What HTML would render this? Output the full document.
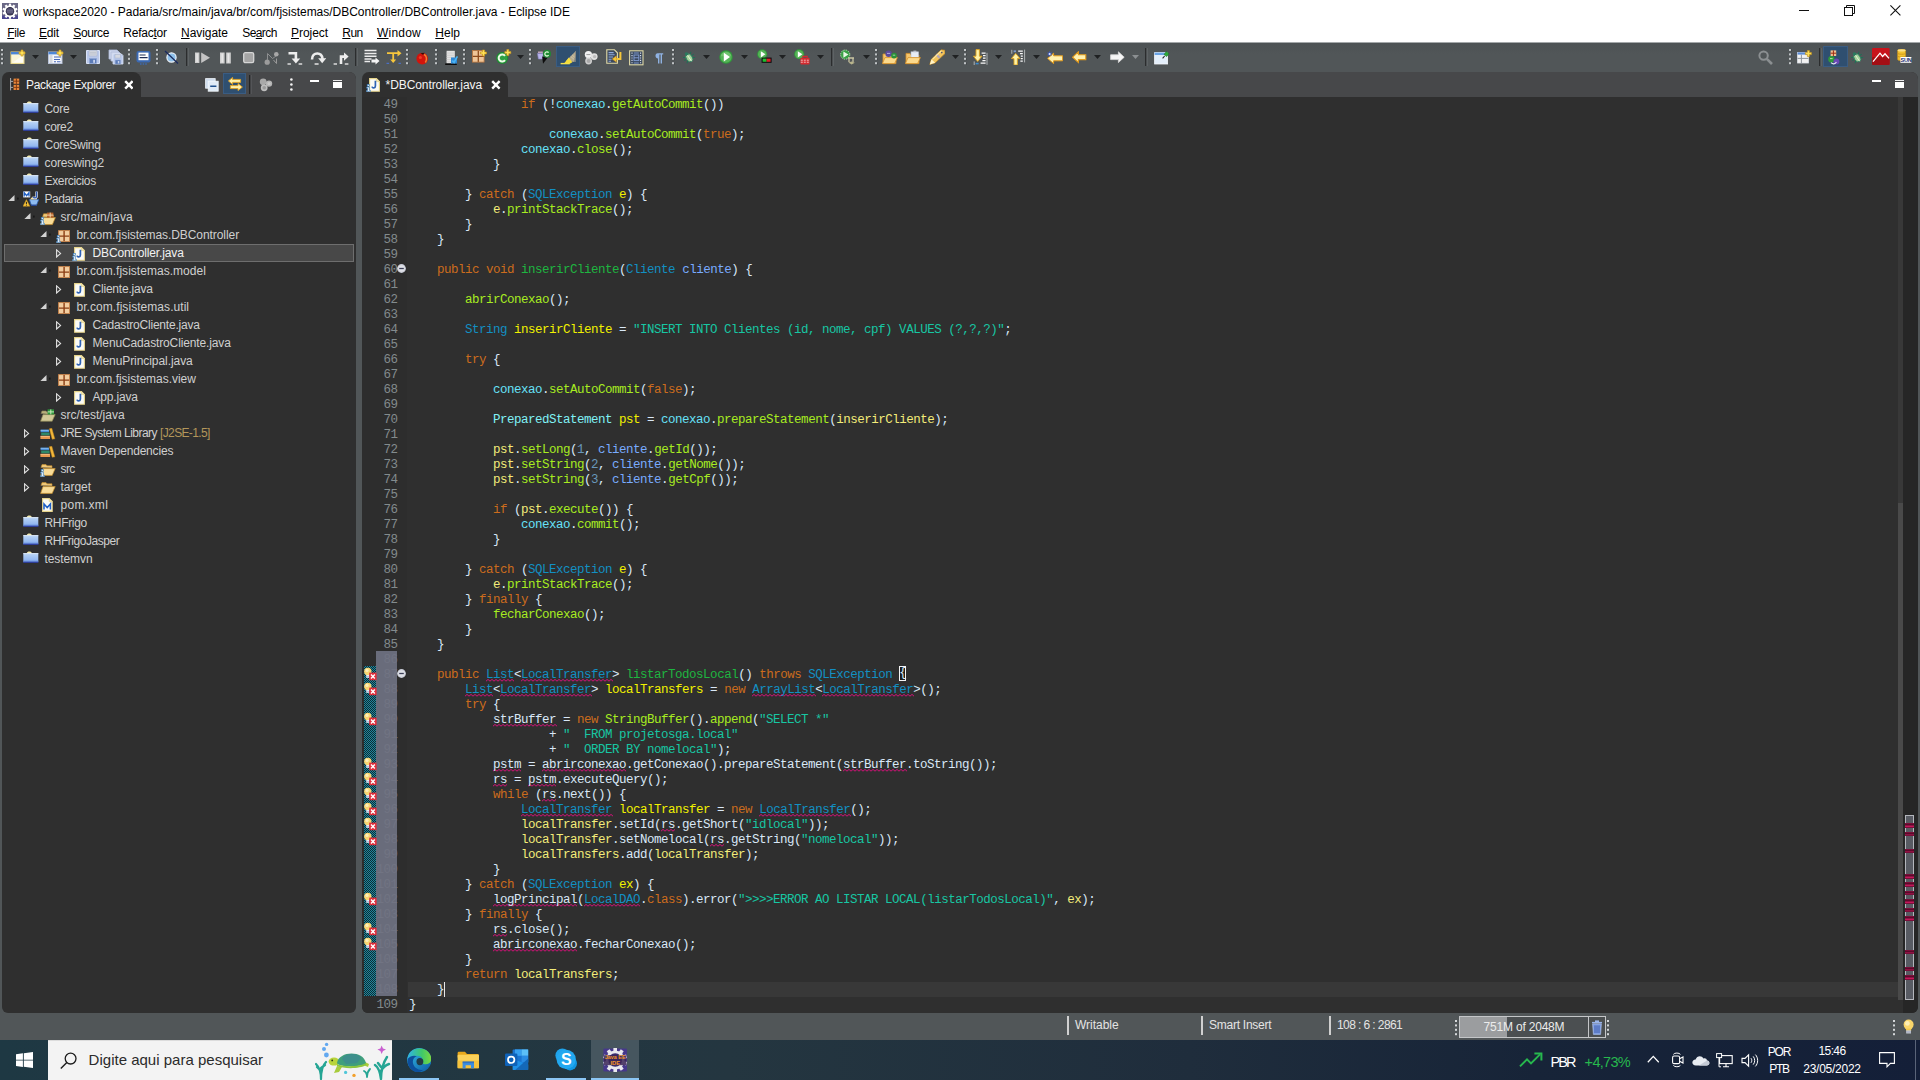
<!DOCTYPE html>
<html lang="pt"><head><meta charset="utf-8"><title>Eclipse IDE</title>
<style>
*{box-sizing:border-box}
html,body{margin:0;padding:0}
body{width:1920px;height:1080px;overflow:hidden;position:relative;background:#515658;font-family:"Liberation Sans",sans-serif;font-size:12px;color:#eee}
.abs{position:absolute}
#title{position:absolute;left:0;top:0;width:1920px;height:22px;background:#fff;color:#000}
#title .t{position:absolute;left:23.3px;top:5px;font-size:12px;line-height:15px;white-space:nowrap}
#menu{position:absolute;left:0;top:22px;width:1920px;height:21px;background:#fff;color:#000}
#menu span{position:absolute;top:4px;font-size:12px;line-height:15px;white-space:nowrap}
#menu u{text-decoration:underline;text-underline-offset:1px}
#toolbar{position:absolute;left:0;top:43px;width:1920px;height:29px;background:linear-gradient(#4d5254,#515658 40%)}
/* panels */
.panel{position:absolute;background:#2f2f2f;border-radius:7px 7px 6px 6px;overflow:hidden}
.phead{position:absolute;left:0;top:0;right:0;height:25px;background:#47484a}
.tab{position:absolute;left:0;top:0;height:25px;background:#2f2f2f;border-radius:7px 8px 0 0}
.tab .lbl{position:absolute;top:6px;font-size:12px;line-height:15px;color:#f4f4f4;white-space:nowrap}
/* tree */
.tx{position:absolute;height:18px;font-size:12px;line-height:18px;color:#cfcfcf;white-space:nowrap}
/* code */
.cl{position:absolute;font-family:"Liberation Mono",monospace;font-size:12.5px;letter-spacing:-0.5px;line-height:15px;height:15px;white-space:pre;color:#d9e8f7}
.ln{position:absolute;left:362px;width:35.5px;text-align:right;font-family:"Liberation Mono",monospace;font-size:12.5px;letter-spacing:-0.5px;line-height:15px;height:15px;color:#838b8d}
.ln.dim{color:#717483}
.k{color:#cc6c1d}.c{color:#1290c3}.i{color:#80f2f6}.m{color:#a7ec21}.d{color:#1eb540}.v{color:#f2f200}.r{color:#f3ec79}.p{color:#79abff}.f{color:#66e1f8}.s{color:#17c6a3}.n{color:#6897bb}
.u{background:linear-gradient(45deg,transparent 38%,#d8127c 38%,#d8127c 62%,transparent 62%) 0 12px/4px 3px repeat-x,linear-gradient(-45deg,transparent 38%,#d8127c 38%,#d8127c 62%,transparent 62%) 2px 12px/4px 3px repeat-x;padding:0 0.5px;margin:0 -0.5px}
.box{display:inline-block;height:15px;line-height:15px;vertical-align:top;margin-top:-2px;outline:1px solid #f4f4f4;outline-offset:-1px;background:#1b1b1b}
/* status */
#status{position:absolute;left:0;top:1013px;width:1920px;height:27px;background:#515658;color:#e4e4e4}
#status .st{position:absolute;top:5px;font-size:12px;line-height:15px;white-space:nowrap}
#status .sep{position:absolute;top:3px;width:2px;height:19px;background:#d0d0d0}
/* taskbar */
#taskbar{position:absolute;left:0;top:1040px;width:1920px;height:40px;background:linear-gradient(90deg,#1e3843 0%,#243640 38%,#1f2d3c 62%,#172438 80%,#141f38 100%);color:#fff}

</style></head>
<body>
<div id="title"><svg class="abs" style="left:2px;top:3px" width="16" height="16" viewBox="0 0 16 16" ><rect width="16" height="16" fill="#6a6886"/><rect y="12.6" width="16" height="3.4" fill="#4a4690"/><g fill="#fff"><circle cx="8" cy="8.2" r="6"/><rect x="6.9" y="0.6" width="2.2" height="3" transform="rotate(0 8 8.2)"/><rect x="6.9" y="0.6" width="2.2" height="3" transform="rotate(36 8 8.2)"/><rect x="6.9" y="0.6" width="2.2" height="3" transform="rotate(72 8 8.2)"/><rect x="6.9" y="0.6" width="2.2" height="3" transform="rotate(108 8 8.2)"/><rect x="6.9" y="0.6" width="2.2" height="3" transform="rotate(144 8 8.2)"/><rect x="6.9" y="0.6" width="2.2" height="3" transform="rotate(180 8 8.2)"/><rect x="6.9" y="0.6" width="2.2" height="3" transform="rotate(216 8 8.2)"/><rect x="6.9" y="0.6" width="2.2" height="3" transform="rotate(252 8 8.2)"/><rect x="6.9" y="0.6" width="2.2" height="3" transform="rotate(288 8 8.2)"/><rect x="6.9" y="0.6" width="2.2" height="3" transform="rotate(324 8 8.2)"/></g><circle cx="8" cy="8.2" r="4.2" fill="#2a2840"/><circle cx="8" cy="8.2" r="3.4" fill="#4a4868"/><path d="M4.6 7.2h6.8M4.6 9h6.8" stroke="#8a88a8" stroke-width=".7"/></svg><div class="t"><span style="letter-spacing:-0.015px">workspace2020 - Padaria/src/main/java/br/com/fjsistemas/DBController/DBController.java - Eclipse IDE</span></div><svg class="abs" style="left:1799px;top:10px" width="10" height="1" viewBox="0 0 10 1" ><rect width="10" height="1" fill="#111"/></svg><svg class="abs" style="left:1844px;top:5px" width="11" height="11" viewBox="0 0 11 11" ><path d="M2.5 2.5V0.5h8v8h-2" fill="none" stroke="#111" stroke-width="1"/><rect x="0.5" y="2.5" width="8" height="8" fill="none" stroke="#111" stroke-width="1"/></svg><svg class="abs" style="left:1890px;top:5px" width="11" height="11" viewBox="0 0 11 11" ><path d="M0.4 0.4l10 10M10.4 0.4l-10 10" stroke="#111" stroke-width="1.1"/></svg></div>
<div id="menu"><span style="left:7.3px;letter-spacing:-0.411px"><u>F</u>ile</span><span style="left:39px;letter-spacing:-0.172px"><u>E</u>dit</span><span style="left:73.3px;letter-spacing:-0.389px"><u>S</u>ource</span><span style="left:123.3px;letter-spacing:-0.245px">Refac<u>t</u>or</span><span style="left:181px;letter-spacing:-0.047px"><u>N</u>avigate</span><span style="left:242.3px;letter-spacing:-0.605px">Se<u>a</u>rch</span><span style="left:291px;letter-spacing:-0.051px"><u>P</u>roject</span><span style="left:342.3px;letter-spacing:-0.539px"><u>R</u>un</span><span style="left:377px;letter-spacing:0.219px"><u>W</u>indow</span><span style="left:435.3px;letter-spacing:0.003px"><u>H</u>elp</span></div>
<div class="abs" id="tbline" style="left:0;top:42px;width:1920px;height:1px;background:#a4a8aa"></div>
<div id="toolbar"><svg class="abs" style="left:0.7px;top:5.9px" width="3" height="16" viewBox="0 0 3 16" ><rect x="0" y="0" width="2" height="2" fill="#bfc3c5"/><rect x="2" y="0.5" width="1" height="2" fill="#3a3e40" opacity=".55"/><rect x="0" y="4.4" width="2" height="2" fill="#bfc3c5"/><rect x="2" y="4.9" width="1" height="2" fill="#3a3e40" opacity=".55"/><rect x="0" y="8.8" width="2" height="2" fill="#bfc3c5"/><rect x="2" y="9.3" width="1" height="2" fill="#3a3e40" opacity=".55"/><rect x="0" y="13.2" width="2" height="2" fill="#bfc3c5"/><rect x="2" y="13.7" width="1" height="2" fill="#3a3e40" opacity=".55"/></svg>
<svg class="abs" style="left:10px;top:6px" width="16" height="16" viewBox="0 0 16 16" ><rect x="1" y="3" width="13" height="11.5" fill="#fbf6d8" stroke="#e9d88c"/><rect x="1" y="3" width="13" height="2.4" fill="#4d86d6"/><path d="M3 13.5L13 6v7.5z" fill="#fff" opacity=".7"/><path d="M11 1h2v2h2v2h-2v2h-2v-2h-2v-2h2z" fill="#ffe35a" stroke="#c8961e" stroke-width=".7"/></svg>
<svg class="abs" style="left:32.4px;top:12.3px" width="7" height="4" viewBox="0 0 7 4" ><path d="M0 0h7L3.5 4z" fill="#1f2122"/></svg>
<svg class="abs" style="left:48px;top:6px" width="16" height="16" viewBox="0 0 16 16" ><rect x="0.5" y="3" width="13.5" height="11.5" fill="#f4f6fb" stroke="#b8c2d8"/><rect x="0.5" y="3" width="13.5" height="2.4" fill="#4d86d6"/><rect x="1.5" y="6" width="3" height="8" fill="#d4d8e0"/><path d="M6 8h7M6 10.5h6M6 12.8h2M9 12.8h3.5" stroke="#4868b8" stroke-width="1.1"/><path d="M11 1h2v2h2v2h-2v2h-2v-2h-2v-2h2z" fill="#ffe35a" stroke="#c8961e" stroke-width=".7"/></svg>
<svg class="abs" style="left:70.2px;top:12.3px" width="7" height="4" viewBox="0 0 7 4" ><path d="M0 0h7L3.5 4z" fill="#1f2122"/></svg>
<svg class="abs" style="left:85px;top:6px" width="16" height="16" viewBox="0 0 16 16" ><path d="M1.5 1.5h13v13h-13z" fill="#b9c8ea" stroke="#d9e2f6"/><rect x="4" y="1.5" width="8" height="5.5" fill="#d5d9e2" stroke="#a9b3c9" stroke-width=".6"/><path d="M5 3.3h6M5 5h6" stroke="#b4b9c4" stroke-width=".7"/><rect x="4.5" y="9.5" width="7" height="5" fill="#5c7cb8" stroke="#8fa6d6" stroke-width=".6"/><rect x="8.2" y="10.8" width="1.8" height="3" fill="#c7d3ee"/></svg>
<svg class="abs" style="left:108px;top:6px" width="16" height="16" viewBox="0 0 16 16" ><path d="M1 1h8l2 2v7h-10z" fill="#cfd8ee" stroke="#aebbd8" stroke-width=".8"/><path d="M3 3h8l2 2v7h-10z" fill="#cfd8ee" stroke="#aebbd8" stroke-width=".8"/><path d="M5 5h8.5l1.5 1.5v8.5h-10z" fill="#b9c8ea" stroke="#dbe3f5" stroke-width=".8"/><rect x="7" y="5.5" width="5.5" height="3.5" fill="#d5d9e2" stroke="#a9b3c9" stroke-width=".5"/><rect x="7.2" y="11" width="5.3" height="4" fill="#5c7cb8" stroke="#8fa6d6" stroke-width=".5"/><rect x="9.8" y="12" width="1.5" height="2.4" fill="#c7d3ee"/></svg>
<svg class="abs" style="left:127.7px;top:5.9px" width="3" height="16" viewBox="0 0 3 16" ><rect x="0" y="0" width="2" height="2" fill="#bfc3c5"/><rect x="2" y="0.5" width="1" height="2" fill="#3a3e40" opacity=".55"/><rect x="0" y="4.4" width="2" height="2" fill="#bfc3c5"/><rect x="2" y="4.9" width="1" height="2" fill="#3a3e40" opacity=".55"/><rect x="0" y="8.8" width="2" height="2" fill="#bfc3c5"/><rect x="2" y="9.3" width="1" height="2" fill="#3a3e40" opacity=".55"/><rect x="0" y="13.2" width="2" height="2" fill="#bfc3c5"/><rect x="2" y="13.7" width="1" height="2" fill="#3a3e40" opacity=".55"/></svg>
<svg class="abs" style="left:136px;top:6.5px" width="16" height="16" viewBox="0 0 16 16" ><rect x="0.5" y="1" width="14" height="11.5" rx="2" fill="#3b69b2"/><rect x="2.5" y="2.6" width="10" height="7.6" fill="#fff"/><path d="M3.6 5h6M3.6 7.6h8" stroke="#1d2c55" stroke-width="1.2"/><path d="M4 14h7" stroke="#3b69b2" stroke-width="1.4" stroke-dasharray="1.6 1"/></svg>
<svg class="abs" style="left:155.7px;top:5.9px" width="3" height="16" viewBox="0 0 3 16" ><rect x="0" y="0" width="2" height="2" fill="#bfc3c5"/><rect x="2" y="0.5" width="1" height="2" fill="#3a3e40" opacity=".55"/><rect x="0" y="4.4" width="2" height="2" fill="#bfc3c5"/><rect x="2" y="4.9" width="1" height="2" fill="#3a3e40" opacity=".55"/><rect x="0" y="8.8" width="2" height="2" fill="#bfc3c5"/><rect x="2" y="9.3" width="1" height="2" fill="#3a3e40" opacity=".55"/><rect x="0" y="13.2" width="2" height="2" fill="#bfc3c5"/><rect x="2" y="13.7" width="1" height="2" fill="#3a3e40" opacity=".55"/></svg>
<svg class="abs" style="left:164px;top:6px" width="16" height="16" viewBox="0 0 16 16" ><circle cx="7.5" cy="8.5" r="4.6" fill="#8cc0ea" stroke="#eef4fb" stroke-width="1.2"/><path d="M1 2L14 14.5" stroke="#1a2a5e" stroke-width="1.3"/></svg>
<svg class="abs" style="left:185.5px;top:5px" width="3" height="18" viewBox="0 0 3 18" ><rect x="0" y="0" width="1.6" height="18" fill="#2b2d2e"/><rect x="1.6" y="0" width="1" height="18" fill="#676c6e"/></svg>
<svg class="abs" style="left:194.5px;top:6.5px" width="16" height="16" viewBox="0 0 16 16" ><rect x="0" y="2.5" width="4.4" height="10.5" fill="#cfcfcf"/><rect x="1.4" y="3.5" width="1.4" height="8.5" fill="#e6e6e6"/><path d="M6.2 2.5L15 7.8L6.2 13z" fill="#c4c4c4"/></svg>
<svg class="abs" style="left:220px;top:6.5px" width="16" height="16" viewBox="0 0 16 16" ><rect x="0" y="2.5" width="4.6" height="11" fill="#d0d0d0"/><rect x="1.5" y="3.5" width="1.4" height="9" fill="#e8e8e8"/><rect x="6.2" y="2.5" width="4.6" height="11" fill="#d0d0d0"/><rect x="7.7" y="3.5" width="1.4" height="9" fill="#e8e8e8"/></svg>
<svg class="abs" style="left:243px;top:6.5px" width="16" height="16" viewBox="0 0 16 16" ><rect x="0.7" y="2.7" width="10" height="10" rx="1.6" fill="#a5a5a5" stroke="#d6d6d6" stroke-width="1.3"/></svg>
<svg class="abs" style="left:264px;top:6.5px" width="16" height="16" viewBox="0 0 16 16" ><circle cx="3.2" cy="12.2" r="2.6" fill="#9c9c9c"/><path d="M3.5 10L3.5 3.5L8.5 8.5L12 6" stroke="#8d8f90" stroke-width="1" fill="none"/><circle cx="12.3" cy="4.2" r="2.3" fill="#a8a8a8"/><path d="M9.5 10l3 3.5v-5" stroke="#9a9a9a" stroke-width="1" fill="none"/></svg>
<svg class="abs" style="left:286.5px;top:6.5px" width="16" height="16" viewBox="0 0 16 16" ><path d="M1.5 3.2h7.4v6.2" stroke="#ededed" stroke-width="2.6" fill="none"/><path d="M4.6 8.6h8.6l-4.3 5z" fill="#ededed"/><path d="M0.5 14h3.4M11.6 14h3.6" stroke="#dcdcdc" stroke-width="1.6"/></svg>
<svg class="abs" style="left:309.5px;top:6.5px" width="16" height="16" viewBox="0 0 16 16" ><path d="M2 9.5C2 1.5 12.5 1.5 12.5 9" stroke="#ededed" stroke-width="2.6" fill="none"/><path d="M8.2 8.3h8l-4 5z" fill="#ededed"/><path d="M4.6 14h4" stroke="#dcdcdc" stroke-width="1.6"/></svg>
<svg class="abs" style="left:332.5px;top:6.5px" width="16" height="16" viewBox="0 0 16 16" ><path d="M8 14V6.6h4" stroke="#ededed" stroke-width="2.6" fill="none"/><path d="M11 2.4l4.6 4.2l-4.6 4.2z" fill="#ededed"/><path d="M0.6 14h3.4M11.8 14h3.6" stroke="#dcdcdc" stroke-width="1.6"/></svg>
<svg class="abs" style="left:354.5px;top:5px" width="3" height="18" viewBox="0 0 3 18" ><rect x="0" y="0" width="1.6" height="18" fill="#2b2d2e"/><rect x="1.6" y="0" width="1" height="18" fill="#676c6e"/></svg>
<svg class="abs" style="left:364px;top:6px" width="16" height="16" viewBox="0 0 16 16" ><path d="M0.5 1.6h12M0.5 4.4h12M0.5 7.2h12M0.5 10h7M0.5 12.6h5.5" stroke="#ececec" stroke-width="1.5"/><path d="M7.5 10.6h4v-2l4 3.4l-4 3.4v-2h-4z" fill="#f4f4f4"/></svg>
<svg class="abs" style="left:386px;top:6px" width="16" height="16" viewBox="0 0 16 16" ><path d="M1 4.2h11.5M7.2 4.2v8" stroke="#f7c63c" stroke-width="1.8" fill="none"/><path d="M11.5 1l4 3.2l-4 3.2z" fill="#f7c63c"/><path d="M4.2 10.5h6l-3 3.6z" fill="#f7c63c"/><path d="M0.5 14.4h2.6M12.5 14.4h2.4" stroke="#4a6fc4" stroke-width="1.3"/></svg>
<svg class="abs" style="left:406.2px;top:5.9px" width="3" height="16" viewBox="0 0 3 16" ><rect x="0" y="0" width="2" height="2" fill="#bfc3c5"/><rect x="2" y="0.5" width="1" height="2" fill="#3a3e40" opacity=".55"/><rect x="0" y="4.4" width="2" height="2" fill="#bfc3c5"/><rect x="2" y="4.9" width="1" height="2" fill="#3a3e40" opacity=".55"/><rect x="0" y="8.8" width="2" height="2" fill="#bfc3c5"/><rect x="2" y="9.3" width="1" height="2" fill="#3a3e40" opacity=".55"/><rect x="0" y="13.2" width="2" height="2" fill="#bfc3c5"/><rect x="2" y="13.7" width="1" height="2" fill="#3a3e40" opacity=".55"/></svg>
<svg class="abs" style="left:416px;top:6.5px" width="16" height="16" viewBox="0 0 16 16" ><circle cx="6.2" cy="8.6" r="5.8" fill="#d2140c"/><path d="M8 4.5c2.5 1 3.4 4.6 1.4 8" stroke="#f08030" stroke-width="1.5" fill="none"/><path d="M4.5 3.2l2.5 1.6l1.6-2z" fill="#2a1208"/><circle cx="4.4" cy="7.5" r="1.6" fill="#ee3a24"/></svg>
<svg class="abs" style="left:434.7px;top:5.9px" width="3" height="16" viewBox="0 0 3 16" ><rect x="0" y="0" width="2" height="2" fill="#bfc3c5"/><rect x="2" y="0.5" width="1" height="2" fill="#3a3e40" opacity=".55"/><rect x="0" y="4.4" width="2" height="2" fill="#bfc3c5"/><rect x="2" y="4.9" width="1" height="2" fill="#3a3e40" opacity=".55"/><rect x="0" y="8.8" width="2" height="2" fill="#bfc3c5"/><rect x="2" y="9.3" width="1" height="2" fill="#3a3e40" opacity=".55"/><rect x="0" y="13.2" width="2" height="2" fill="#bfc3c5"/><rect x="2" y="13.7" width="1" height="2" fill="#3a3e40" opacity=".55"/></svg>
<svg class="abs" style="left:444.5px;top:6.5px" width="16" height="16" viewBox="0 0 16 16" ><rect x="1.6" y="0.8" width="8.2" height="12.6" fill="#e3e3e3"/><path d="M1.6 3h8.2M1.6 5.2h8.2M1.6 7.4h8.2M1.6 9.6h8.2M1.6 11.8h8.2" stroke="#c9c9c9" stroke-width=".8"/><path d="M0.2 14.2h11.6" stroke="#0c0c0c" stroke-width="1.6"/><rect x="6" y="7.5" width="6" height="6" fill="#2f8ad8"/><path d="M7.3 10.6l1.8 1.8L12.4 6.4" stroke="#49b4f4" stroke-width="1.6" fill="none"/></svg>
<svg class="abs" style="left:462.7px;top:5.9px" width="3" height="16" viewBox="0 0 3 16" ><rect x="0" y="0" width="2" height="2" fill="#bfc3c5"/><rect x="2" y="0.5" width="1" height="2" fill="#3a3e40" opacity=".55"/><rect x="0" y="4.4" width="2" height="2" fill="#bfc3c5"/><rect x="2" y="4.9" width="1" height="2" fill="#3a3e40" opacity=".55"/><rect x="0" y="8.8" width="2" height="2" fill="#bfc3c5"/><rect x="2" y="9.3" width="1" height="2" fill="#3a3e40" opacity=".55"/><rect x="0" y="13.2" width="2" height="2" fill="#bfc3c5"/><rect x="2" y="13.7" width="1" height="2" fill="#3a3e40" opacity=".55"/></svg>
<svg class="abs" style="left:472px;top:6px" width="16" height="16" viewBox="0 0 16 16" ><rect x="0.5" y="1.5" width="11.6" height="11.6" fill="#efc597"/><path d="M6.3 1.5v11.6M0.5 7.3h11.6" stroke="#8c4a1c" stroke-width="1.3"/><rect x="0.5" y="1.5" width="11.6" height="11.6" fill="none" stroke="#b9763e" stroke-width=".8"/><path d="M10.5 1h2v2h2v2h-2v2h-2v-2h-2v-2h2z" fill="#ffe35a" stroke="#c8961e" stroke-width=".7"/></svg>
<svg class="abs" style="left:496px;top:6px" width="16" height="16" viewBox="0 0 16 16" ><circle cx="6.2" cy="9" r="6" fill="#1f8a32"/><circle cx="6.2" cy="9" r="5" fill="#2ea043"/><path d="M9 6.9A3.5 3.5 0 1 0 9 11.1" stroke="#ecfbe6" stroke-width="2" fill="none"/><path d="M10.8 0.6h2v2h2v2h-2v2h-2v-2h-2v-2h2z" fill="#ffe35a" stroke="#c8961e" stroke-width=".7"/></svg>
<svg class="abs" style="left:516.8px;top:12.3px" width="7" height="4" viewBox="0 0 7 4" ><path d="M0 0h7L3.5 4z" fill="#1f2122"/></svg>
<svg class="abs" style="left:529px;top:5.9px" width="3" height="16" viewBox="0 0 3 16" ><rect x="0" y="0" width="2" height="2" fill="#bfc3c5"/><rect x="2" y="0.5" width="1" height="2" fill="#3a3e40" opacity=".55"/><rect x="0" y="4.4" width="2" height="2" fill="#bfc3c5"/><rect x="2" y="4.9" width="1" height="2" fill="#3a3e40" opacity=".55"/><rect x="0" y="8.8" width="2" height="2" fill="#bfc3c5"/><rect x="2" y="9.3" width="1" height="2" fill="#3a3e40" opacity=".55"/><rect x="0" y="13.2" width="2" height="2" fill="#bfc3c5"/><rect x="2" y="13.7" width="1" height="2" fill="#3a3e40" opacity=".55"/></svg>
<svg class="abs" style="left:537px;top:6px" width="16" height="16" viewBox="0 0 16 16" ><path d="M0.5 4.5h5.8l-0.9 5.5h-4z" fill="#b9b4ea" stroke="#8a86c6" stroke-width=".6"/><path d="M1 3.2h4.8" stroke="#d9b4d4" stroke-width="1.2"/><path d="M5.2 7.4l5.4 1.4l-4.6 6z" fill="#0d0d0d"/><circle cx="10" cy="4.8" r="4" fill="#1e8a34"/><path d="M11.6 3.6A2.1 2.1 0 1 0 11.6 6.2" stroke="#d7f7d2" stroke-width="1.3" fill="none"/></svg>
<div class="abs" style="left:556px;top:3px;width:24px;height:21px;background:#2f4f70;border:1px solid #3a5c82"></div>
<svg class="abs" style="left:560px;top:6px" width="16" height="16" viewBox="0 0 16 16" ><path d="M15.6 2.2L6 12L14.5 13z" fill="#b5a98e"/><path d="M15.6 2.2l-0.4 10.8" stroke="#8c8a84" stroke-width="1"/><path d="M12 5.8l2.6 2.4M10.6 7.4l3.6 3" stroke="#d7cdb2" stroke-width=".7"/><path d="M4 14.5L8.8 8.6l3.6 4.6l-2.2 1.3z" fill="#f6dd3a"/><path d="M0.6 14.6h9.2" stroke="#f7e24a" stroke-width="1.4"/></svg>
<svg class="abs" style="left:584px;top:7px" width="16" height="16" viewBox="0 0 16 16" ><circle cx="4.4" cy="4.6" r="3.6" fill="#f1f1f1"/><circle cx="10.2" cy="6.6" r="3.4" fill="#e2e2e2"/><circle cx="4.6" cy="11" r="3.4" fill="#cfcfcf"/><circle cx="4.6" cy="11" r="2" fill="#a9a9a9"/><path d="M2.4 4.6h4" stroke="#9b9b9b" stroke-width="1"/><circle cx="10.6" cy="6.6" r="1.7" fill="#bdbdbd"/></svg>
<svg class="abs" style="left:606px;top:5.5px" width="16" height="16" viewBox="0 0 16 16" ><path d="M0.8 0.8h7.6l3 3v10.4h-10.6z" fill="#3d4a5e" stroke="#e3dca6" stroke-width="1.1"/><path d="M2.6 3.6h5M2.6 5.8h6M2.6 8h4.4M2.6 10.2h3M2.6 12.2h2.4" stroke="#8fa9dc" stroke-width="1.1"/><path d="M14.4 3v7h-5" stroke="#f6c73a" stroke-width="2" fill="none"/><path d="M10.4 6.8v6.4L6.2 10z" fill="#f6c73a" stroke="#c98a1a" stroke-width=".5"/></svg>
<svg class="abs" style="left:629px;top:6.5px" width="16" height="16" viewBox="0 0 16 16" ><rect x="0.6" y="0.8" width="13.4" height="14" fill="#39475d" stroke="#dfd9a6" stroke-width="1.1"/><path d="M3 2.6v10.6M11.6 2.6v10.6" stroke="#dfe6f2" stroke-width="1.1" stroke-dasharray="1.2 1.2"/><path d="M4.8 3h5M4.8 13h5" stroke="#7f9ad0" stroke-width="1"/><rect x="5" y="5" width="4.8" height="5.6" fill="none" stroke="#7f9ad0" stroke-width="1"/><path d="M5 7.8h4.8" stroke="#7f9ad0" stroke-width="1"/></svg>
<svg class="abs" style="left:654px;top:9px" width="16" height="16" viewBox="0 0 16 16" ><path d="M3.6 1.2h5.6v1.4h-1.2v8.8h-1.4V2.6h-1.2v8.8H4V6.4C1.2 6.4 0.4 1.6 3.6 1.2z" fill="#8fb2e2"/></svg>
<svg class="abs" style="left:672px;top:5.9px" width="3" height="16" viewBox="0 0 3 16" ><rect x="0" y="0" width="2" height="2" fill="#bfc3c5"/><rect x="2" y="0.5" width="1" height="2" fill="#3a3e40" opacity=".55"/><rect x="0" y="4.4" width="2" height="2" fill="#bfc3c5"/><rect x="2" y="4.9" width="1" height="2" fill="#3a3e40" opacity=".55"/><rect x="0" y="8.8" width="2" height="2" fill="#bfc3c5"/><rect x="2" y="9.3" width="1" height="2" fill="#3a3e40" opacity=".55"/><rect x="0" y="13.2" width="2" height="2" fill="#bfc3c5"/><rect x="2" y="13.7" width="1" height="2" fill="#3a3e40" opacity=".55"/></svg>
<svg class="abs" style="left:683px;top:8px" width="16" height="16" viewBox="0 0 16 16" ><g transform="rotate(-35 6 6.5)"><path d="M1 3l10 7M1 10l10-7M0.4 6.5h11.4" stroke="#1f6f55" stroke-width="1"/><ellipse cx="6" cy="7" rx="3.1" ry="4.3" fill="#a6d39a" stroke="#2b7a5e" stroke-width=".9"/><path d="M6 3.4v7.6" stroke="#e7f4dc" stroke-width=".9"/><circle cx="6" cy="2.2" r="1.7" fill="#2b7a5e"/></g></svg>
<svg class="abs" style="left:703px;top:12.3px" width="7" height="4" viewBox="0 0 7 4" ><path d="M0 0h7L3.5 4z" fill="#1f2122"/></svg>
<svg class="abs" style="left:719.3px;top:7px" width="16" height="16" viewBox="0 0 16 16" ><circle cx="7" cy="7" r="6.7" fill="#2f9a3a"/><circle cx="7" cy="7" r="5.7" fill="#55b357"/><path d="M1.6 6.2A5.6 5.6 0 0 1 12.4 6.2z" fill="#7fcb7c" opacity=".6"/><path d="M4.8 2.8L11 7L4.8 11.4z" fill="#fff"/></svg>
<svg class="abs" style="left:741px;top:12.3px" width="7" height="4" viewBox="0 0 7 4" ><path d="M0 0h7L3.5 4z" fill="#1f2122"/></svg>
<svg class="abs" style="left:756.5px;top:6.3px" width="16" height="16" viewBox="0 0 16 16" ><circle cx="5.2" cy="5.2" r="5" fill="#2f9a3a"/><circle cx="5.2" cy="5.2" r="4.2" fill="#55b357"/><path d="M3.8 2.2L8.4 5.2L3.8 8.4z" fill="#fff"/><rect x="4.6" y="8.6" width="10" height="5.2" fill="#0a0a0a"/><rect x="5.6" y="9.6" width="4" height="3.2" fill="#1fbf2f"/><rect x="9.6" y="9.6" width="4" height="3.2" fill="#de1f2a"/></svg>
<svg class="abs" style="left:778.7px;top:12.3px" width="7" height="4" viewBox="0 0 7 4" ><path d="M0 0h7L3.5 4z" fill="#1f2122"/></svg>
<svg class="abs" style="left:794px;top:6.3px" width="16" height="16" viewBox="0 0 16 16" ><circle cx="5.2" cy="5.2" r="5" fill="#2f9a3a"/><circle cx="5.2" cy="5.2" r="4.2" fill="#55b357"/><path d="M3.8 2.2L8.4 5.2L3.8 8.4z" fill="#fff"/><rect x="6.4" y="8.8" width="9.2" height="6.6" rx="1" fill="#d42a2f"/><path d="M8.8 8.8v-1.4h4.4v1.4" stroke="#d42a2f" stroke-width="1.1" fill="none"/><path d="M6.8 11.2h8.4M6.8 13.2h8.4" stroke="#f6c8c8" stroke-width=".9" stroke-dasharray="2 1"/></svg>
<svg class="abs" style="left:817px;top:12.3px" width="7" height="4" viewBox="0 0 7 4" ><path d="M0 0h7L3.5 4z" fill="#1f2122"/></svg>
<svg class="abs" style="left:830.5px;top:5px" width="3" height="18" viewBox="0 0 3 18" ><rect x="0" y="0" width="1.6" height="18" fill="#2b2d2e"/><rect x="1.6" y="0" width="1" height="18" fill="#676c6e"/></svg>
<svg class="abs" style="left:840px;top:6px" width="16" height="16" viewBox="0 0 16 16" ><circle cx="5.2" cy="5.6" r="4.6" fill="#3aa046" stroke="#a9dba8" stroke-width="1" stroke-dasharray="1.4 1"/><path d="M3.4 2.6L8.4 5.6L3.4 8.8z" fill="#e9f7e6"/><path d="M8 9h6M9 9v4M13 9v4" stroke="#c9c5a3" stroke-width="1.3"/><path d="M8.4 13.6l3.2-1.2l3.2 1.4l-3.2 1.6z" fill="#b8b48c"/></svg>
<svg class="abs" style="left:862.7px;top:12.3px" width="7" height="4" viewBox="0 0 7 4" ><path d="M0 0h7L3.5 4z" fill="#1f2122"/></svg>
<svg class="abs" style="left:874.7px;top:5.9px" width="3" height="16" viewBox="0 0 3 16" ><rect x="0" y="0" width="2" height="2" fill="#bfc3c5"/><rect x="2" y="0.5" width="1" height="2" fill="#3a3e40" opacity=".55"/><rect x="0" y="4.4" width="2" height="2" fill="#bfc3c5"/><rect x="2" y="4.9" width="1" height="2" fill="#3a3e40" opacity=".55"/><rect x="0" y="8.8" width="2" height="2" fill="#bfc3c5"/><rect x="2" y="9.3" width="1" height="2" fill="#3a3e40" opacity=".55"/><rect x="0" y="13.2" width="2" height="2" fill="#bfc3c5"/><rect x="2" y="13.7" width="1" height="2" fill="#3a3e40" opacity=".55"/></svg>
<svg class="abs" style="left:882px;top:6.5px" width="16" height="16" viewBox="0 0 16 16" ><path d="M1 4h4l1 1.6h8v8h-13z" fill="#f4c56c" stroke="#d6912a" stroke-width=".8"/><path d="M0.4 13.6l2.6-6h12.4l-2.8 6z" fill="#fbd98c" stroke="#d6912a" stroke-width=".8"/><circle cx="6.6" cy="3.8" r="3.2" fill="#5a4a9c"/><path d="M5 3.4h3.2" stroke="#b9b0e0" stroke-width=".9"/><circle cx="12" cy="5.6" r="2.9" fill="#2a8f3a"/><path d="M10.8 5.2h2.4" stroke="#a8dca8" stroke-width=".9"/></svg>
<svg class="abs" style="left:904.5px;top:6.5px" width="16" height="16" viewBox="0 0 16 16" ><path d="M1 3.4h4l1 1.6h8v8.6h-13z" fill="#f4c56c" stroke="#d6912a" stroke-width=".8"/><rect x="6" y="1.8" width="7.6" height="6" fill="#e6ecf6" stroke="#b5bccb" stroke-width=".6"/><rect x="8.4" y="0.6" width="3" height="1.6" fill="#b9bfcb"/><path d="M0.4 13.6l2.6-6h12.4l-2.8 6z" fill="#fbd98c" stroke="#d6912a" stroke-width=".8"/></svg>
<svg class="abs" style="left:928.8px;top:6.2px" width="16" height="16" viewBox="0 0 16 16" ><path d="M0.8 15.4l1.6-5.2L12.2 0.8l3.6 0.4l0.2 3.4L6 14z" fill="#f3c45c" stroke="#c68a1e" stroke-width=".7"/><path d="M0.8 15.4l1.6-5.2l3.8 3.6z" fill="#fff4c8"/><path d="M7.2 5.4l3.6 3.6" stroke="#b5a7b5" stroke-width="2.2"/><circle cx="12.8" cy="3.6" r="0.8" fill="#3c4a78"/><path d="M3.4 10.4L12.4 1.6" stroke="#fde9a8" stroke-width="1.2"/></svg>
<svg class="abs" style="left:952px;top:12.3px" width="7" height="4" viewBox="0 0 7 4" ><path d="M0 0h7L3.5 4z" fill="#1f2122"/></svg>
<svg class="abs" style="left:964px;top:5.9px" width="3" height="16" viewBox="0 0 3 16" ><rect x="0" y="0" width="2" height="2" fill="#bfc3c5"/><rect x="2" y="0.5" width="1" height="2" fill="#3a3e40" opacity=".55"/><rect x="0" y="4.4" width="2" height="2" fill="#bfc3c5"/><rect x="2" y="4.9" width="1" height="2" fill="#3a3e40" opacity=".55"/><rect x="0" y="8.8" width="2" height="2" fill="#bfc3c5"/><rect x="2" y="9.3" width="1" height="2" fill="#3a3e40" opacity=".55"/><rect x="0" y="13.2" width="2" height="2" fill="#bfc3c5"/><rect x="2" y="13.7" width="1" height="2" fill="#3a3e40" opacity=".55"/></svg>
<svg class="abs" style="left:973px;top:6px" width="16" height="16" viewBox="0 0 16 16" ><path d="M3 0.6h3.4v6.6h2.6l-4.3 5.2L0.4 7.2h2.6z" fill="#fff3a8" stroke="#e0a41c" stroke-width=".9"/><path d="M8.6 4.2h4M10 6.700h2.600M10 9.200h2.600M9.400 11.700h3.200M7.600 14.200h5" stroke="#fafafa" stroke-width="1.200"/><path d="M1.2 12.4v3.6M14 3.8v12" stroke="#b9bdc0" stroke-width=".9"/><path d="M2.6 14.6h3" stroke="#3f8fd0" stroke-width="1.5"/></svg>
<svg class="abs" style="left:995px;top:12.3px" width="7" height="4" viewBox="0 0 7 4" ><path d="M0 0h7L3.5 4z" fill="#1f2122"/></svg>
<svg class="abs" style="left:1011px;top:6px" width="16" height="16" viewBox="0 0 16 16" ><path d="M3 16h3.4V9.6h2.6L4.7 4.4L0.4 9.6h2.6z" fill="#fff3a8" stroke="#e0a41c" stroke-width=".9"/><path d="M7.200 2.200h4.600M9 4.700h2.800M9.800 7.200h2M9.800 9.700h2M9.400 12.200h2.400" stroke="#fafafa" stroke-width="1.200"/><path d="M0.8 0.8v4M13.6 0.6v12.8" stroke="#b9bdc0" stroke-width=".9"/><rect x="2.6" y="1.4" width="2.4" height="1.8" fill="#7b98c8"/></svg>
<svg class="abs" style="left:1033px;top:12.3px" width="7" height="4" viewBox="0 0 7 4" ><path d="M0 0h7L3.5 4z" fill="#1f2122"/></svg>
<svg class="abs" style="left:1046.5px;top:7.5px" width="16" height="16" viewBox="0 0 16 16" ><path d="M6.6 2.2v2.6h9v5h-9v2.8L0.6 7.4z" fill="#fff1b0" stroke="#e29a1a" stroke-width="1"/><path d="M2.6 0.4v5M0.6 1.6l4 2.6M4.6 1.6l-4 2.6" stroke="#3d5bc0" stroke-width="1.1"/><circle cx="2.6" cy="2.9" r="1" fill="#dfe7fb"/></svg>
<svg class="abs" style="left:1072px;top:8px" width="16" height="16" viewBox="0 0 16 16" ><path d="M6.4 0.8v3h7.4v4.8H6.4v3L0.6 6.2z" fill="#fff1b0" stroke="#e29a1a" stroke-width="1.1"/></svg>
<svg class="abs" style="left:1094px;top:12.3px" width="7" height="4" viewBox="0 0 7 4" ><path d="M0 0h7L3.5 4z" fill="#1f2122"/></svg>
<svg class="abs" style="left:1109.5px;top:8px" width="16" height="16" viewBox="0 0 16 16" ><path d="M8.4 0.8v3H0.6v4.8h7.8v3l5.8-5.4z" fill="#f6f6f6" stroke="#d9d9d9" stroke-width=".8"/></svg>
<svg class="abs" style="left:1131.6px;top:12.3px" width="7" height="4" viewBox="0 0 7 4" ><path d="M0 0h7L3.5 4z" fill="#8b8f91"/></svg>
<svg class="abs" style="left:1145.3px;top:5px" width="3" height="18" viewBox="0 0 3 18" ><rect x="0" y="0" width="1.6" height="18" fill="#2b2d2e"/><rect x="1.6" y="0" width="1" height="18" fill="#676c6e"/></svg>
<svg class="abs" style="left:1154px;top:7.5px" width="16" height="16" viewBox="0 0 16 16" ><rect x="0.6" y="1.6" width="13" height="11.4" fill="#e4effb" stroke="#f4f8fd" stroke-width=".8"/><rect x="0.6" y="1.6" width="13" height="2.4" fill="#6aa4e6"/><path d="M8.6 7.4l2-2.4" stroke="#222" stroke-width="1.1"/><path d="M10 3.4l2.4-2.8l2.6 2.2l-2.4 2.8z" fill="#2ea83a" stroke="#1c7a26" stroke-width=".6"/></svg>
<svg class="abs" style="left:1757.5px;top:7px" width="16" height="16" viewBox="0 0 16 16" ><circle cx="5.6" cy="5.6" r="4.2" fill="none" stroke="#8b8f91" stroke-width="2"/><path d="M8.8 8.8L14 14" stroke="#8b8f91" stroke-width="2.6"/></svg>
<svg class="abs" style="left:1788.7px;top:5.9px" width="3" height="16" viewBox="0 0 3 16" ><rect x="0" y="0" width="2" height="2" fill="#bfc3c5"/><rect x="2" y="0.5" width="1" height="2" fill="#3a3e40" opacity=".55"/><rect x="0" y="4.4" width="2" height="2" fill="#bfc3c5"/><rect x="2" y="4.9" width="1" height="2" fill="#3a3e40" opacity=".55"/><rect x="0" y="8.8" width="2" height="2" fill="#bfc3c5"/><rect x="2" y="9.3" width="1" height="2" fill="#3a3e40" opacity=".55"/><rect x="0" y="13.2" width="2" height="2" fill="#bfc3c5"/><rect x="2" y="13.7" width="1" height="2" fill="#3a3e40" opacity=".55"/></svg>
<svg class="abs" style="left:1797px;top:6.5px" width="16" height="16" viewBox="0 0 16 16" ><rect x="0.6" y="2.4" width="10.8" height="10.6" fill="#f2f2f2" stroke="#dfe4ec" stroke-width=".8"/><rect x="0.6" y="2.4" width="10.8" height="2.2" fill="#5a8cd8"/><path d="M4.4 4.6v8.4M0.6 8.4h10.8" stroke="#8f959c" stroke-width="1"/><path d="M10.4 0.6h2v2h2v2h-2v2h-2v-2h-2v-2h2z" fill="#ffe35a" stroke="#c8961e" stroke-width=".7"/></svg>
<svg class="abs" style="left:1818.5px;top:4.6px" width="3" height="18.6" viewBox="0 0 3 18.6" ><rect x="0" y="0" width="1.6" height="18.6" fill="#2b2d2e"/><rect x="1.6" y="0" width="1" height="18.6" fill="#676c6e"/></svg>
<div class="abs" style="left:1823px;top:3px;width:25px;height:21px;background:#2f4f70;border:1px solid #3a5c82"></div>
<svg class="abs" style="left:1827px;top:7px" width="16" height="16" viewBox="0 0 16 16" ><rect x="3.6" y="0.4" width="5.6" height="5.6" fill="#f0c090"/><path d="M6.4 0.4v5.6M3.6 3.2h5.6" stroke="#9c2a12" stroke-width="1"/><circle cx="4.4" cy="9.2" r="3.2" fill="#2f9a3a"/><path d="M3 8.6h2.6" stroke="#b8e6b4" stroke-width=".9"/><circle cx="9.4" cy="11.4" r="2.9" fill="#6a48b4"/><path d="M4 12.6c2 2 4 1.6 5.4-0.6" stroke="#e8e8f4" stroke-width="1.2" fill="none"/></svg>
<svg class="abs" style="left:1851px;top:7.5px" width="16" height="16" viewBox="0 0 16 16" ><g transform="rotate(-35 6 6.5)"><path d="M1 3l10 7M1 10l10-7M0.4 6.5h11.4" stroke="#1f6f55" stroke-width="1"/><ellipse cx="6" cy="7" rx="3.1" ry="4.3" fill="#a6d39a" stroke="#2b7a5e" stroke-width=".9"/><path d="M6 3.4v7.6" stroke="#e7f4dc" stroke-width=".9"/><circle cx="6" cy="2.2" r="1.7" fill="#2b7a5e"/></g></svg>
<svg class="abs" style="left:1872px;top:5px" width="18" height="17" viewBox="0 0 18 17" ><rect x="0" y="0" width="17.6" height="17" rx="1.2" fill="#c8141c"/><rect x="0" y="9" width="17.6" height="8" rx="1.2" fill="#a30e14"/><path d="M1 13.6l7-8.4l2.6 3.2l2.4-2.6l4 4.6" stroke="#fff" stroke-width="1.3" fill="none"/></svg>
<svg class="abs" style="left:1896.5px;top:6px" width="16" height="16" viewBox="0 0 16 16" ><path d="M0.6 1.4c0-1.6 8-1.6 8 0v9c0 1.6-8 1.6-8 0z" fill="#f2c230" stroke="#c9921a" stroke-width=".6"/><path d="M0.6 4.2c0 1.4 8 1.4 8 0M0.6 7c0 1.4 8 1.4 8 0" stroke="#c9921a" stroke-width=".8" fill="none"/><ellipse cx="4.6" cy="1.4" rx="4" ry="1.1" fill="#fbe08a"/><rect x="3.4" y="8" width="11" height="5.8" fill="#fff"/></svg>
<div class="abs" style="left:1900.4px;top:14.4px;font:bold 5.6px 'Liberation Sans',sans-serif;color:#16306e;letter-spacing:-.2px;line-height:6px">SUN</div></div>

<!-- left panel -->
<div class="panel" id="left" style="left:2px;top:72px;width:354px;height:941px">
 <div class="phead"><div class="tab" style="width:139px"><svg class="abs" style="left:8px;top:6.4px" width="10" height="13" viewBox="0 0 10 13" ><path d="M0.6 0v12.4M0.6 3.4h2.4M0.6 9.4h2.4" stroke="#a9adb0" stroke-width="1" fill="none"/><rect x="3.6" y="0.6" width="5.6" height="5.2" fill="#e8873a"/><rect x="3.6" y="6.8" width="5.6" height="5.2" fill="#e8873a"/><path d="M6.4 0.6v11.4M3.6 3.2h5.6M3.6 9.4h5.6" stroke="#7a3410" stroke-width=".9"/></svg><div class="lbl" style="left:24px"><span style="letter-spacing:-0.326px">Package Explorer</span></div><svg class="abs" style="left:121.6px;top:8.2px" width="9.8" height="9.8" viewBox="0 0 9.8 9.8" ><path d="M1.2 1.2l7.4 7.4M8.6 1.2l-7.4 7.4" stroke="#fff" stroke-width="2.4"/></svg></div><svg class="abs" style="left:202.5px;top:5.6px" width="14" height="14" viewBox="0 0 14 14" ><rect x="0.6" y="0.6" width="9.6" height="9.6" fill="#cfdcec" stroke="#eef3f9" stroke-width=".8"/><rect x="3.2" y="3.2" width="10" height="10" fill="#dfeaf6" stroke="#f4f8fc" stroke-width=".8"/><path d="M5.2 8.2h6.2" stroke="#1f4f8c" stroke-width="1.6"/></svg><div class="abs" style="left:220.6px;top:1px;width:23.4px;height:21px;background:#2f4f70;border:1px solid #3a5c82"></div><svg class="abs" style="left:226px;top:5.4px" width="15" height="14" viewBox="0 0 15 14" ><path d="M4.6 0.4v2h8v3h-8v2L0.4 3.9z" fill="#fff0a8" stroke="#e0a020" stroke-width=".9"/><path d="M10 6.6v2H2.4v3H10v2l4.4-3.5z" fill="#fff0a8" stroke="#e0a020" stroke-width=".9"/></svg><svg class="abs" style="left:246.8px;top:3px" width="3" height="19" viewBox="0 0 3 19" ><rect width="1.6" height="19" fill="#242526"/><rect x="1.6" width="1" height="19" fill="#5c5e60"/></svg><svg class="abs" style="left:257px;top:5.6px" width="14" height="14" viewBox="0 0 14 14" ><circle cx="4.2" cy="3.8" r="3.4" fill="#a9a9a9"/><circle cx="10" cy="5.6" r="3.2" fill="#b4b4b4"/><circle cx="5.2" cy="9.8" r="3.4" fill="#bdbdbd"/><circle cx="5.2" cy="9.8" r="1.8" fill="#9a9a9a"/><circle cx="10" cy="5.6" r="1.6" fill="#c8c8c8"/></svg><svg class="abs" style="left:288px;top:6px" width="3" height="13" viewBox="0 0 3 13" ><circle cx="1.4" cy="1.5" r="1.3" fill="#f4f4f4"/><circle cx="1.4" cy="6.5" r="1.3" fill="#f4f4f4"/><circle cx="1.4" cy="11.5" r="1.3" fill="#f4f4f4"/></svg><svg class="abs" style="left:307.6px;top:8px" width="9" height="2.2" viewBox="0 0 9 2.2" ><rect width="9" height="2.2" fill="#fff"/></svg><svg class="abs" style="left:330.6px;top:8px" width="9" height="8.4" viewBox="0 0 9 8.4" ><rect y="0" width="9" height="0.9" fill="#fff"/><rect y="2" width="9" height="6.4" fill="#fff"/></svg></div>
</div>
<div id="tree"><svg class="abs" style="left:22.8px;top:101.3px" width="16" height="13" viewBox="0 0 16 13" ><defs><linearGradient id="pg" x1="0" y1="0" x2="0" y2="1"><stop offset="0" stop-color="#bcd6f6"/><stop offset="1" stop-color="#86aeee"/></linearGradient></defs><path d="M3.8 2.4c0-2.6 5-2.6 5 0z" fill="#f1e9ae"/><rect x="0.3" y="2.2" width="15" height="9" fill="url(#pg)"/><path d="M0.300 2.600h15" stroke="#e9f1fc" stroke-width=".8"/><path d="M0.300 11.200h15" stroke="#2f3f9c" stroke-width="1.500"/><path d="M0.300 10.200h15" stroke="#5f86dc" stroke-width=".8"/></svg>
<div class="tx" style="left:44.5px;top:100px;color:#cfcfcf;letter-spacing:-0.304px">Core</div>
<svg class="abs" style="left:22.8px;top:119.3px" width="16" height="13" viewBox="0 0 16 13" ><defs><linearGradient id="pg" x1="0" y1="0" x2="0" y2="1"><stop offset="0" stop-color="#bcd6f6"/><stop offset="1" stop-color="#86aeee"/></linearGradient></defs><path d="M3.8 2.4c0-2.6 5-2.6 5 0z" fill="#f1e9ae"/><rect x="0.3" y="2.2" width="15" height="9" fill="url(#pg)"/><path d="M0.300 2.600h15" stroke="#e9f1fc" stroke-width=".8"/><path d="M0.300 11.200h15" stroke="#2f3f9c" stroke-width="1.500"/><path d="M0.300 10.200h15" stroke="#5f86dc" stroke-width=".8"/></svg>
<div class="tx" style="left:44.5px;top:118px;color:#cfcfcf;letter-spacing:-0.366px">core2</div>
<svg class="abs" style="left:22.8px;top:137.3px" width="16" height="13" viewBox="0 0 16 13" ><defs><linearGradient id="pg" x1="0" y1="0" x2="0" y2="1"><stop offset="0" stop-color="#bcd6f6"/><stop offset="1" stop-color="#86aeee"/></linearGradient></defs><path d="M3.8 2.4c0-2.6 5-2.6 5 0z" fill="#f1e9ae"/><rect x="0.3" y="2.2" width="15" height="9" fill="url(#pg)"/><path d="M0.300 2.600h15" stroke="#e9f1fc" stroke-width=".8"/><path d="M0.300 11.200h15" stroke="#2f3f9c" stroke-width="1.500"/><path d="M0.300 10.200h15" stroke="#5f86dc" stroke-width=".8"/></svg>
<div class="tx" style="left:44.5px;top:136px;color:#cfcfcf;letter-spacing:-0.289px">CoreSwing</div>
<svg class="abs" style="left:22.8px;top:155.3px" width="16" height="13" viewBox="0 0 16 13" ><defs><linearGradient id="pg" x1="0" y1="0" x2="0" y2="1"><stop offset="0" stop-color="#bcd6f6"/><stop offset="1" stop-color="#86aeee"/></linearGradient></defs><path d="M3.8 2.4c0-2.6 5-2.6 5 0z" fill="#f1e9ae"/><rect x="0.3" y="2.2" width="15" height="9" fill="url(#pg)"/><path d="M0.300 2.600h15" stroke="#e9f1fc" stroke-width=".8"/><path d="M0.300 11.200h15" stroke="#2f3f9c" stroke-width="1.500"/><path d="M0.300 10.200h15" stroke="#5f86dc" stroke-width=".8"/></svg>
<div class="tx" style="left:44.5px;top:154px;color:#cfcfcf;letter-spacing:-0.12px">coreswing2</div>
<svg class="abs" style="left:22.8px;top:173.3px" width="16" height="13" viewBox="0 0 16 13" ><defs><linearGradient id="pg" x1="0" y1="0" x2="0" y2="1"><stop offset="0" stop-color="#bcd6f6"/><stop offset="1" stop-color="#86aeee"/></linearGradient></defs><path d="M3.8 2.4c0-2.6 5-2.6 5 0z" fill="#f1e9ae"/><rect x="0.3" y="2.2" width="15" height="9" fill="url(#pg)"/><path d="M0.300 2.600h15" stroke="#e9f1fc" stroke-width=".8"/><path d="M0.300 11.200h15" stroke="#2f3f9c" stroke-width="1.500"/><path d="M0.300 10.200h15" stroke="#5f86dc" stroke-width=".8"/></svg>
<div class="tx" style="left:44.5px;top:172px;color:#cfcfcf;letter-spacing:-0.339px">Exercicios</div>
<svg class="abs" style="left:7.7px;top:194.7px" width="11" height="6.4" viewBox="0 0 11 6.4" ><path d="M6.500 0v6.400H0z" fill="#d2d2d2"/><rect x="9.400" y="2.600" width="1" height="2" fill="#0a0a0a"/></svg>
<svg class="abs" style="left:23.4px;top:191px" width="16" height="16" viewBox="0 0 16 16" ><path d="M6.400 8.600h9.400l-2.400 5.800H8.400z" fill="#8fbcf0" stroke="#2f5fb0" stroke-width=".8"/><path d="M8 14.200h5.400" stroke="#243f8c" stroke-width="1.200"/><path d="M7 8.400l1.600-2h4l1.400 2" fill="#f6e2a0"/><rect x="0.2" y="0.4" width="7" height="6" fill="#fff"/><path d="M1.2 5.6V1.6l2.4 3l2.4-3v4" stroke="#1f5fc4" stroke-width="1.3" fill="none"/><path d="M13.6 0.6v4.6c0 2.2-3 2.2-3.2 0.4" stroke="#e8f0fc" stroke-width="2.4" fill="none"/><path d="M13.6 0.6v4.6c0 2.2-3 2.2-3.2 0.4" stroke="#2f58b0" stroke-width="1.2" fill="none"/><path d="M3.4 8.6l3.4 6.6H0z" fill="#f6c43a" stroke="#c9901a" stroke-width=".5"/><path d="M3.4 10.8v2.4M3.4 13.8v.8" stroke="#222" stroke-width="1"/></svg>
<div class="tx" style="left:44.5px;top:190px;color:#cfcfcf;letter-spacing:-0.482px">Padaria</div>
<svg class="abs" style="left:23.7px;top:212.7px" width="11" height="6.4" viewBox="0 0 11 6.4" ><path d="M6.500 0v6.400H0z" fill="#d2d2d2"/><rect x="9.400" y="2.600" width="1" height="2" fill="#0a0a0a"/></svg>
<svg class="abs" style="left:40px;top:211.8px" width="16" height="14" viewBox="0 0 16 14" ><path d="M2.6 4.8l1-3h4l1 1.2h4.6v2" fill="#f0c878" stroke="#c98f2a" stroke-width=".6"/><path d="M0.6 12.6L3 5.6h12.4l-3 7z" fill="#f8dc98" stroke="#c98f2a" stroke-width=".7"/><rect x="7" y="0.6" width="6.4" height="5" fill="#b5622a"/><path d="M10.2 0.6v5M7 3.1h6.4" stroke="#f6dcb8" stroke-width=".9"/></svg>
<svg class="abs" style="left:40.1px;top:217.4px" width="5" height="8" viewBox="0 0 5 8" ><rect x="1.2" y="0.3" width="2.2" height="1.9" fill="#eaf3fc" stroke="#2a74b8" stroke-width=".6"/><path d="M0.7 3h2.7v3.4h1.1v1.3H0.4V6.4h1.1V4.3H0.7z" fill="#eaf3fc" stroke="#2a74b8" stroke-width=".6"/></svg>
<div class="tx" style="left:60.5px;top:208px;color:#cfcfcf;letter-spacing:0.124px">src/main/java</div>
<svg class="abs" style="left:39.7px;top:230.7px" width="11" height="6.4" viewBox="0 0 11 6.4" ><path d="M6.500 0v6.400H0z" fill="#d2d2d2"/><rect x="9.400" y="2.600" width="1" height="2" fill="#0a0a0a"/></svg>
<svg class="abs" style="left:57.8px;top:229.8px" width="12" height="12" viewBox="0 0 12 12" ><rect x="0.6" y="0.6" width="11" height="11" fill="#f2cda0"/><path d="M6.1 0.6v11M0.6 6.1h11" stroke="#8a3e14" stroke-width="1.4"/><rect x="0.6" y="0.6" width="11" height="11" fill="none" stroke="#c8844a" stroke-width=".9"/></svg>
<svg class="abs" style="left:56.1px;top:235.4px" width="5" height="8" viewBox="0 0 5 8" ><rect x="1.2" y="0.3" width="2.2" height="1.9" fill="#eaf3fc" stroke="#2a74b8" stroke-width=".6"/><path d="M0.7 3h2.7v3.4h1.1v1.3H0.4V6.4h1.1V4.3H0.7z" fill="#eaf3fc" stroke="#2a74b8" stroke-width=".6"/></svg>
<div class="tx" style="left:76.5px;top:226px;color:#cfcfcf;letter-spacing:-0.071px">br.com.fjsistemas.DBController</div>
<div class="abs" style="left:4px;top:244px;width:350px;height:18px;background:#484848;border:1px solid #6e6e6e"></div>
<svg class="abs" style="left:55.8px;top:248.8px" width="6" height="9" viewBox="0 0 6 9" ><path d="M0.6 0.8l4 3.6l-4 3.6z" fill="none" stroke="#e2e2e2" stroke-width="1.1"/></svg>
<svg class="abs" style="left:74.4px;top:246.6px" width="11" height="14" viewBox="0 0 11 14" ><path d="M0.6 0.6h6.8l3 3v9.6H0.6z" fill="#fbfbf6" stroke="#e6d48a" stroke-width="1.1"/><path d="M7.4 0.6v3h3" fill="#f3e7b4" stroke="#e6d48a" stroke-width=".7"/><path d="M6.4 2.8v5.2c0 2.4-3 2.4-3.4 0.6" stroke="#2f62b4" stroke-width="1.7" fill="none"/></svg>
<svg class="abs" style="left:72.1px;top:253.4px" width="5" height="8" viewBox="0 0 5 8" ><rect x="1.2" y="0.3" width="2.2" height="1.9" fill="#eaf3fc" stroke="#2a74b8" stroke-width=".6"/><path d="M0.7 3h2.7v3.4h1.1v1.3H0.4V6.4h1.1V4.3H0.7z" fill="#eaf3fc" stroke="#2a74b8" stroke-width=".6"/></svg>
<div class="tx" style="left:92.5px;top:244px;color:#f2f2f2;letter-spacing:-0.122px">DBController.java</div>
<svg class="abs" style="left:39.7px;top:266.7px" width="11" height="6.4" viewBox="0 0 11 6.4" ><path d="M6.500 0v6.400H0z" fill="#d2d2d2"/><rect x="9.400" y="2.600" width="1" height="2" fill="#0a0a0a"/></svg>
<svg class="abs" style="left:57.8px;top:265.8px" width="12" height="12" viewBox="0 0 12 12" ><rect x="0.6" y="0.6" width="11" height="11" fill="#f2cda0"/><path d="M6.1 0.6v11M0.6 6.1h11" stroke="#8a3e14" stroke-width="1.4"/><rect x="0.6" y="0.6" width="11" height="11" fill="none" stroke="#c8844a" stroke-width=".9"/></svg>
<div class="tx" style="left:76.5px;top:262px;color:#cfcfcf;letter-spacing:0.03px">br.com.fjsistemas.model</div>
<svg class="abs" style="left:55.8px;top:284.8px" width="6" height="9" viewBox="0 0 6 9" ><path d="M0.6 0.8l4 3.6l-4 3.6z" fill="none" stroke="#e2e2e2" stroke-width="1.1"/></svg>
<svg class="abs" style="left:74.4px;top:282.6px" width="11" height="14" viewBox="0 0 11 14" ><path d="M0.6 0.6h6.8l3 3v9.6H0.6z" fill="#fbfbf6" stroke="#e6d48a" stroke-width="1.1"/><path d="M7.4 0.6v3h3" fill="#f3e7b4" stroke="#e6d48a" stroke-width=".7"/><path d="M6.4 2.8v5.2c0 2.4-3 2.4-3.4 0.6" stroke="#2f62b4" stroke-width="1.7" fill="none"/></svg>
<div class="tx" style="left:92.5px;top:280px;color:#cfcfcf;letter-spacing:-0.2px">Cliente.java</div>
<svg class="abs" style="left:39.7px;top:302.7px" width="11" height="6.4" viewBox="0 0 11 6.4" ><path d="M6.500 0v6.400H0z" fill="#d2d2d2"/><rect x="9.400" y="2.600" width="1" height="2" fill="#0a0a0a"/></svg>
<svg class="abs" style="left:57.8px;top:301.8px" width="12" height="12" viewBox="0 0 12 12" ><rect x="0.6" y="0.6" width="11" height="11" fill="#f2cda0"/><path d="M6.1 0.6v11M0.6 6.1h11" stroke="#8a3e14" stroke-width="1.4"/><rect x="0.6" y="0.6" width="11" height="11" fill="none" stroke="#c8844a" stroke-width=".9"/></svg>
<div class="tx" style="left:76.5px;top:298px;color:#cfcfcf;letter-spacing:0.056px">br.com.fjsistemas.util</div>
<svg class="abs" style="left:55.8px;top:320.8px" width="6" height="9" viewBox="0 0 6 9" ><path d="M0.6 0.8l4 3.6l-4 3.6z" fill="none" stroke="#e2e2e2" stroke-width="1.1"/></svg>
<svg class="abs" style="left:74.4px;top:318.6px" width="11" height="14" viewBox="0 0 11 14" ><path d="M0.6 0.6h6.8l3 3v9.6H0.6z" fill="#fbfbf6" stroke="#e6d48a" stroke-width="1.1"/><path d="M7.4 0.6v3h3" fill="#f3e7b4" stroke="#e6d48a" stroke-width=".7"/><path d="M6.4 2.8v5.2c0 2.4-3 2.4-3.4 0.6" stroke="#2f62b4" stroke-width="1.7" fill="none"/></svg>
<div class="tx" style="left:92.5px;top:316px;color:#cfcfcf;letter-spacing:-0.21px">CadastroCliente.java</div>
<svg class="abs" style="left:55.8px;top:338.8px" width="6" height="9" viewBox="0 0 6 9" ><path d="M0.6 0.8l4 3.6l-4 3.6z" fill="none" stroke="#e2e2e2" stroke-width="1.1"/></svg>
<svg class="abs" style="left:74.4px;top:336.6px" width="11" height="14" viewBox="0 0 11 14" ><path d="M0.6 0.6h6.8l3 3v9.6H0.6z" fill="#fbfbf6" stroke="#e6d48a" stroke-width="1.1"/><path d="M7.4 0.6v3h3" fill="#f3e7b4" stroke="#e6d48a" stroke-width=".7"/><path d="M6.4 2.8v5.2c0 2.4-3 2.4-3.4 0.6" stroke="#2f62b4" stroke-width="1.7" fill="none"/></svg>
<div class="tx" style="left:92.5px;top:334px;color:#cfcfcf;letter-spacing:-0.134px">MenuCadastroCliente.java</div>
<svg class="abs" style="left:55.8px;top:356.8px" width="6" height="9" viewBox="0 0 6 9" ><path d="M0.6 0.8l4 3.6l-4 3.6z" fill="none" stroke="#e2e2e2" stroke-width="1.1"/></svg>
<svg class="abs" style="left:74.4px;top:354.6px" width="11" height="14" viewBox="0 0 11 14" ><path d="M0.6 0.6h6.8l3 3v9.6H0.6z" fill="#fbfbf6" stroke="#e6d48a" stroke-width="1.1"/><path d="M7.4 0.6v3h3" fill="#f3e7b4" stroke="#e6d48a" stroke-width=".7"/><path d="M6.4 2.8v5.2c0 2.4-3 2.4-3.4 0.6" stroke="#2f62b4" stroke-width="1.7" fill="none"/></svg>
<div class="tx" style="left:92.5px;top:352px;color:#cfcfcf;letter-spacing:-0.066px">MenuPrincipal.java</div>
<svg class="abs" style="left:39.7px;top:374.7px" width="11" height="6.4" viewBox="0 0 11 6.4" ><path d="M6.500 0v6.400H0z" fill="#d2d2d2"/><rect x="9.400" y="2.600" width="1" height="2" fill="#0a0a0a"/></svg>
<svg class="abs" style="left:57.8px;top:373.8px" width="12" height="12" viewBox="0 0 12 12" ><rect x="0.6" y="0.6" width="11" height="11" fill="#f2cda0"/><path d="M6.1 0.6v11M0.6 6.1h11" stroke="#8a3e14" stroke-width="1.4"/><rect x="0.6" y="0.6" width="11" height="11" fill="none" stroke="#c8844a" stroke-width=".9"/></svg>
<div class="tx" style="left:76.5px;top:370px;color:#cfcfcf;letter-spacing:-0.029px">br.com.fjsistemas.view</div>
<svg class="abs" style="left:55.8px;top:392.8px" width="6" height="9" viewBox="0 0 6 9" ><path d="M0.6 0.8l4 3.6l-4 3.6z" fill="none" stroke="#e2e2e2" stroke-width="1.1"/></svg>
<svg class="abs" style="left:74.4px;top:390.6px" width="11" height="14" viewBox="0 0 11 14" ><path d="M0.6 0.6h6.8l3 3v9.6H0.6z" fill="#fbfbf6" stroke="#e6d48a" stroke-width="1.1"/><path d="M7.4 0.6v3h3" fill="#f3e7b4" stroke="#e6d48a" stroke-width=".7"/><path d="M6.4 2.8v5.2c0 2.4-3 2.4-3.4 0.6" stroke="#2f62b4" stroke-width="1.7" fill="none"/></svg>
<div class="tx" style="left:92.5px;top:388px;color:#cfcfcf;letter-spacing:-0.188px">App.java</div>
<svg class="abs" style="left:40px;top:409.2px" width="16" height="14" viewBox="0 0 16 14" ><path d="M1 4.6l1-2.6h4l1 1.2h5v2" fill="#b8b07c" stroke="#8c8654" stroke-width=".6"/><path d="M0.6 12.2L3 5.6h12.2l-3 6.6z" fill="#d2ca98" stroke="#8c8654" stroke-width=".7"/><rect x="7.6" y="0.4" width="6.4" height="5" fill="#2f9a3c"/><path d="M10.8 0.4v5M7.6 2.9h6.4" stroke="#d8f0c8" stroke-width=".9"/></svg>
<div class="tx" style="left:60.5px;top:406px;color:#cfcfcf;letter-spacing:0.013px">src/test/java</div>
<svg class="abs" style="left:23.8px;top:428.8px" width="6" height="9" viewBox="0 0 6 9" ><path d="M0.6 0.8l4 3.6l-4 3.6z" fill="none" stroke="#e2e2e2" stroke-width="1.1"/></svg>
<svg class="abs" style="left:40px;top:427.6px" width="16" height="13" viewBox="0 0 16 13" ><rect x="0.6" y="1.6" width="8.4" height="2.6" fill="#4a8ed8"/><rect x="1.2" y="4.6" width="8.4" height="2.8" fill="#2f8868"/><rect x="0.4" y="7.8" width="9.6" height="3.2" fill="#e8954a"/><path d="M0.6 2.4h8" stroke="#9cc8f4" stroke-width=".7"/><path d="M0.6 8.6h9" stroke="#f8c89a" stroke-width=".7"/><path d="M9.4 0.8l2.4-.6l3 10.6l-2.6.4z" fill="#f2b83c" stroke="#c98a1a" stroke-width=".5"/></svg>
<div class="tx" style="left:60.5px;top:424px;color:#cfcfcf;letter-spacing:-0.53px">JRE System Library<span style="position:absolute;left:99.6px;color:#b3965a;letter-spacing:-0.653px">[J2SE-1.5]</span></div>
<svg class="abs" style="left:23.8px;top:446.8px" width="6" height="9" viewBox="0 0 6 9" ><path d="M0.6 0.8l4 3.6l-4 3.6z" fill="none" stroke="#e2e2e2" stroke-width="1.1"/></svg>
<svg class="abs" style="left:40px;top:445.6px" width="16" height="13" viewBox="0 0 16 13" ><rect x="0.6" y="1.6" width="8.4" height="2.6" fill="#4a8ed8"/><rect x="1.2" y="4.6" width="8.4" height="2.8" fill="#2f8868"/><rect x="0.4" y="7.8" width="9.6" height="3.2" fill="#e8954a"/><path d="M0.6 2.4h8" stroke="#9cc8f4" stroke-width=".7"/><path d="M0.6 8.6h9" stroke="#f8c89a" stroke-width=".7"/><path d="M9.4 0.8l2.4-.6l3 10.6l-2.6.4z" fill="#f2b83c" stroke="#c98a1a" stroke-width=".5"/></svg>
<div class="tx" style="left:60.5px;top:442px;color:#cfcfcf;letter-spacing:-0.188px">Maven Dependencies</div>
<svg class="abs" style="left:23.8px;top:464.8px" width="6" height="9" viewBox="0 0 6 9" ><path d="M0.6 0.8l4 3.6l-4 3.6z" fill="none" stroke="#e2e2e2" stroke-width="1.1"/></svg>
<svg class="abs" style="left:40px;top:463.4px" width="16" height="14" viewBox="0 0 16 14" ><path d="M1 4.6l1-3h4l1 1.2h5v2" fill="#f0c878" stroke="#c98f2a" stroke-width=".6"/><path d="M0.6 12.4L3 5.6h12.2l-3 6.8z" fill="#f8dc98" stroke="#c98f2a" stroke-width=".7"/></svg>
<svg class="abs" style="left:40.1px;top:469.4px" width="5" height="8" viewBox="0 0 5 8" ><rect x="1.2" y="0.3" width="2.2" height="1.9" fill="#eaf3fc" stroke="#2a74b8" stroke-width=".6"/><path d="M0.7 3h2.7v3.4h1.1v1.3H0.4V6.4h1.1V4.3H0.7z" fill="#eaf3fc" stroke="#2a74b8" stroke-width=".6"/></svg>
<div class="tx" style="left:60.5px;top:460px;color:#cfcfcf;letter-spacing:-0.6px">src</div>
<svg class="abs" style="left:23.8px;top:482.8px" width="6" height="9" viewBox="0 0 6 9" ><path d="M0.6 0.8l4 3.6l-4 3.6z" fill="none" stroke="#e2e2e2" stroke-width="1.1"/></svg>
<svg class="abs" style="left:40px;top:481.4px" width="16" height="14" viewBox="0 0 16 14" ><path d="M1 4.6l1-3h4l1 1.2h5v2" fill="#f0c878" stroke="#c98f2a" stroke-width=".6"/><path d="M0.6 12.4L3 5.6h12.2l-3 6.8z" fill="#f8dc98" stroke="#c98f2a" stroke-width=".7"/></svg>
<div class="tx" style="left:60.5px;top:478px;color:#cfcfcf;letter-spacing:-0.031px">target</div>
<svg class="abs" style="left:42.2px;top:497.8px" width="11" height="14" viewBox="0 0 11 14" ><path d="M0.6 0.6h6.6l3 3v9.8H0.6z" fill="#fbfbf6" stroke="#e6d48a" stroke-width="1.1"/><path d="M7.2 0.6v3h3" fill="#f3e7b4" stroke="#e6d48a" stroke-width=".7"/><path d="M2 11.4V6l3.2 3.6L8.4 6v5.4" stroke="#1f5fc4" stroke-width="1.5" fill="none"/></svg>
<div class="tx" style="left:60.5px;top:496px;color:#cfcfcf;letter-spacing:0.337px">pom.xml</div>
<svg class="abs" style="left:22.8px;top:515.3px" width="16" height="13" viewBox="0 0 16 13" ><defs><linearGradient id="pg" x1="0" y1="0" x2="0" y2="1"><stop offset="0" stop-color="#bcd6f6"/><stop offset="1" stop-color="#86aeee"/></linearGradient></defs><path d="M3.8 2.4c0-2.6 5-2.6 5 0z" fill="#f1e9ae"/><rect x="0.3" y="2.2" width="15" height="9" fill="url(#pg)"/><path d="M0.300 2.600h15" stroke="#e9f1fc" stroke-width=".8"/><path d="M0.300 11.200h15" stroke="#2f3f9c" stroke-width="1.500"/><path d="M0.300 10.200h15" stroke="#5f86dc" stroke-width=".8"/></svg>
<div class="tx" style="left:44.5px;top:514px;color:#cfcfcf;letter-spacing:-0.339px">RHFrigo</div>
<svg class="abs" style="left:22.8px;top:533.3px" width="16" height="13" viewBox="0 0 16 13" ><defs><linearGradient id="pg" x1="0" y1="0" x2="0" y2="1"><stop offset="0" stop-color="#bcd6f6"/><stop offset="1" stop-color="#86aeee"/></linearGradient></defs><path d="M3.8 2.4c0-2.6 5-2.6 5 0z" fill="#f1e9ae"/><rect x="0.3" y="2.2" width="15" height="9" fill="url(#pg)"/><path d="M0.300 2.600h15" stroke="#e9f1fc" stroke-width=".8"/><path d="M0.300 11.200h15" stroke="#2f3f9c" stroke-width="1.500"/><path d="M0.300 10.200h15" stroke="#5f86dc" stroke-width=".8"/></svg>
<div class="tx" style="left:44.5px;top:532px;color:#cfcfcf;letter-spacing:-0.462px">RHFrigoJasper</div>
<svg class="abs" style="left:22.8px;top:551.3px" width="16" height="13" viewBox="0 0 16 13" ><defs><linearGradient id="pg" x1="0" y1="0" x2="0" y2="1"><stop offset="0" stop-color="#bcd6f6"/><stop offset="1" stop-color="#86aeee"/></linearGradient></defs><path d="M3.8 2.4c0-2.6 5-2.6 5 0z" fill="#f1e9ae"/><rect x="0.3" y="2.2" width="15" height="9" fill="url(#pg)"/><path d="M0.300 2.600h15" stroke="#e9f1fc" stroke-width=".8"/><path d="M0.300 11.200h15" stroke="#2f3f9c" stroke-width="1.500"/><path d="M0.300 10.200h15" stroke="#5f86dc" stroke-width=".8"/></svg>
<div class="tx" style="left:44.5px;top:550px;color:#cfcfcf;letter-spacing:-0.086px">testemvn</div></div>

<!-- editor panel -->
<div class="panel" id="editor" style="left:362px;top:72px;width:1556px;height:941px">
 <div class="phead"><div class="tab" style="width:146px"><svg class="abs" style="left:7.4px;top:5.8px" width="11" height="14" viewBox="0 0 11 14" ><path d="M0.6 0.6h6.8l3 3v9.6H0.6z" fill="#fbfbf6" stroke="#e6d48a" stroke-width="1.1"/><path d="M7.4 0.6v3h3" fill="#f3e7b4" stroke="#e6d48a" stroke-width=".7"/><path d="M6.4 2.8v5.2c0 2.4-3 2.4-3.4 0.6" stroke="#2f62b4" stroke-width="1.7" fill="none"/></svg><svg class="abs" style="left:4.4px;top:12.4px" width="5" height="8" viewBox="0 0 5 8" ><rect x="1.2" y="0.3" width="2.2" height="1.9" fill="#eaf3fc" stroke="#2a74b8" stroke-width=".6"/><path d="M0.7 3h2.7v3.4h1.1v1.3H0.4V6.4h1.1V4.3H0.7z" fill="#eaf3fc" stroke="#2a74b8" stroke-width=".6"/></svg><div class="lbl" style="left:23.6px"><span style="letter-spacing:-0.091px">*DBController.java</span></div><svg class="abs" style="left:128.8px;top:8.2px" width="9.8" height="9.8" viewBox="0 0 9.8 9.8" ><path d="M1.2 1.2l7.4 7.4M8.6 1.2l-7.4 7.4" stroke="#fff" stroke-width="2.4"/></svg></div><svg class="abs" style="left:1510px;top:7.8px" width="9" height="2.4" viewBox="0 0 9 2.4" ><rect width="9" height="2.2" fill="#fff"/></svg><svg class="abs" style="left:1533px;top:7.8px" width="9" height="8.6" viewBox="0 0 9 8.6" ><rect y="0" width="9" height="0.9" fill="#fff"/><rect y="2" width="9" height="6.4" fill="#fff"/></svg></div>
</div>
<div id="edbody">
<div class="abs" style="left:362px;top:97px;width:44.5px;height:916px;background:#2d2d2d;border-radius:0 0 0 6px"></div>
<div class="abs" style="left:407.5px;top:982px;width:1490.8px;height:15px;background:#383838"></div>
<div class="abs" style="left:376px;top:651px;width:21px;height:345px;background:#696c7b"></div>
<div class="abs" id="qd" style="left:364px;top:666px;width:12px;height:330px;background:conic-gradient(#1f879c 25%,#0e2b34 0 50%,#1f879c 0 75%,#0e2b34 0) 0 0/2px 2px"></div>
<div class="cl" style="left:521px;top:98px"><span class="k">if</span> (!<span class="f">conexao</span>.<span class="m">getAutoCommit</span>())</div>
<div class="ln" style="top:98px">49</div>
<div class="ln" style="top:113px">50</div>
<div class="cl" style="left:549px;top:128px"><span class="f">conexao</span>.<span class="m">setAutoCommit</span>(<span class="k">true</span>);</div>
<div class="ln" style="top:128px">51</div>
<div class="cl" style="left:521px;top:143px"><span class="f">conexao</span>.<span class="m">close</span>();</div>
<div class="ln" style="top:143px">52</div>
<div class="cl" style="left:493px;top:158px">}</div>
<div class="ln" style="top:158px">53</div>
<div class="ln" style="top:173px">54</div>
<div class="cl" style="left:465px;top:188px">} <span class="k">catch</span> (<span class="c">SQLException</span> <span class="v">e</span>) {</div>
<div class="ln" style="top:188px">55</div>
<div class="cl" style="left:493px;top:203px"><span class="r">e</span>.<span class="m">printStackTrace</span>();</div>
<div class="ln" style="top:203px">56</div>
<div class="cl" style="left:465px;top:218px">}</div>
<div class="ln" style="top:218px">57</div>
<div class="cl" style="left:437px;top:233px">}</div>
<div class="ln" style="top:233px">58</div>
<div class="ln" style="top:248px">59</div>
<div class="cl" style="left:437px;top:263px"><span class="k">public</span> <span class="k">void</span> <span class="d">inserirCliente</span>(<span class="c">Cliente</span> <span class="p">cliente</span>) {</div>
<div class="ln" style="top:263px">60</div>
<div class="ln" style="top:278px">61</div>
<div class="cl" style="left:465px;top:293px"><span class="m">abrirConexao</span>();</div>
<div class="ln" style="top:293px">62</div>
<div class="ln" style="top:308px">63</div>
<div class="cl" style="left:465px;top:323px"><span class="c">String</span> <span class="v">inserirCliente</span> = <span class="s">&quot;INSERT INTO Clientes (id, nome, cpf) VALUES (?,?,?)&quot;</span>;</div>
<div class="ln" style="top:323px">64</div>
<div class="ln" style="top:338px">65</div>
<div class="cl" style="left:465px;top:353px"><span class="k">try</span> {</div>
<div class="ln" style="top:353px">66</div>
<div class="ln" style="top:368px">67</div>
<div class="cl" style="left:493px;top:383px"><span class="f">conexao</span>.<span class="m">setAutoCommit</span>(<span class="k">false</span>);</div>
<div class="ln" style="top:383px">68</div>
<div class="ln" style="top:398px">69</div>
<div class="cl" style="left:493px;top:413px"><span class="i">PreparedStatement</span> <span class="v">pst</span> = <span class="f">conexao</span>.<span class="m">prepareStatement</span>(<span class="r">inserirCliente</span>);</div>
<div class="ln" style="top:413px">70</div>
<div class="ln" style="top:428px">71</div>
<div class="cl" style="left:493px;top:443px"><span class="r">pst</span>.<span class="m">setLong</span>(<span class="n">1</span>, <span class="p">cliente</span>.<span class="m">getId</span>());</div>
<div class="ln" style="top:443px">72</div>
<div class="cl" style="left:493px;top:458px"><span class="r">pst</span>.<span class="m">setString</span>(<span class="n">2</span>, <span class="p">cliente</span>.<span class="m">getNome</span>());</div>
<div class="ln" style="top:458px">73</div>
<div class="cl" style="left:493px;top:473px"><span class="r">pst</span>.<span class="m">setString</span>(<span class="n">3</span>, <span class="p">cliente</span>.<span class="m">getCpf</span>());</div>
<div class="ln" style="top:473px">74</div>
<div class="ln" style="top:488px">75</div>
<div class="cl" style="left:493px;top:503px"><span class="k">if</span> (<span class="r">pst</span>.<span class="m">execute</span>()) {</div>
<div class="ln" style="top:503px">76</div>
<div class="cl" style="left:521px;top:518px"><span class="f">conexao</span>.<span class="m">commit</span>();</div>
<div class="ln" style="top:518px">77</div>
<div class="cl" style="left:493px;top:533px">}</div>
<div class="ln" style="top:533px">78</div>
<div class="ln" style="top:548px">79</div>
<div class="cl" style="left:465px;top:563px">} <span class="k">catch</span> (<span class="c">SQLException</span> <span class="v">e</span>) {</div>
<div class="ln" style="top:563px">80</div>
<div class="cl" style="left:493px;top:578px"><span class="r">e</span>.<span class="m">printStackTrace</span>();</div>
<div class="ln" style="top:578px">81</div>
<div class="cl" style="left:465px;top:593px">} <span class="k">finally</span> {</div>
<div class="ln" style="top:593px">82</div>
<div class="cl" style="left:493px;top:608px"><span class="m">fecharConexao</span>();</div>
<div class="ln" style="top:608px">83</div>
<div class="cl" style="left:465px;top:623px">}</div>
<div class="ln" style="top:623px">84</div>
<div class="cl" style="left:437px;top:638px">}</div>
<div class="ln" style="top:638px">85</div>
<div class="ln dim" style="top:653px">86</div>
<svg class="abs" style="left:485.5px;top:678.6px" width="29" height="3" viewBox="0 0 29 3"><polyline points="0,2.2 2,0.4 4,2.2 6,0.4 8,2.2 10,0.4 12,2.2 14,0.4 16,2.2 18,0.4 20,2.2 22,0.4 24,2.2 26,0.4 28,2.2" fill="none" stroke="#d4127a" stroke-width="1"/></svg>
<svg class="abs" style="left:520.5px;top:678.6px" width="92" height="3" viewBox="0 0 92 3"><polyline points="0,2.2 2,0.4 4,2.2 6,0.4 8,2.2 10,0.4 12,2.2 14,0.4 16,2.2 18,0.4 20,2.2 22,0.4 24,2.2 26,0.4 28,2.2 30,0.4 32,2.2 34,0.4 36,2.2 38,0.4 40,2.2 42,0.4 44,2.2 46,0.4 48,2.2 50,0.4 52,2.2 54,0.4 56,2.2 58,0.4 60,2.2 62,0.4 64,2.2 66,0.4 68,2.2 70,0.4 72,2.2 74,0.4 76,2.2 78,0.4 80,2.2 82,0.4 84,2.2 86,0.4 88,2.2 90,0.4 92,2.2" fill="none" stroke="#d4127a" stroke-width="1"/></svg>
<div class="cl" style="left:437px;top:668px"><span class="k">public</span> <span class="c">List</span>&lt;<span class="c">LocalTransfer</span>&gt; <span class="d">listarTodosLocal</span>() <span class="k">throws</span> <span class="c">SQLException</span> <span class="box">{</span></div>
<div class="ln dim" style="top:668px">87</div>
<svg class="abs" style="left:464.5px;top:693.6px" width="29" height="3" viewBox="0 0 29 3"><polyline points="0,2.2 2,0.4 4,2.2 6,0.4 8,2.2 10,0.4 12,2.2 14,0.4 16,2.2 18,0.4 20,2.2 22,0.4 24,2.2 26,0.4 28,2.2" fill="none" stroke="#d4127a" stroke-width="1"/></svg>
<svg class="abs" style="left:499.5px;top:693.6px" width="92" height="3" viewBox="0 0 92 3"><polyline points="0,2.2 2,0.4 4,2.2 6,0.4 8,2.2 10,0.4 12,2.2 14,0.4 16,2.2 18,0.4 20,2.2 22,0.4 24,2.2 26,0.4 28,2.2 30,0.4 32,2.2 34,0.4 36,2.2 38,0.4 40,2.2 42,0.4 44,2.2 46,0.4 48,2.2 50,0.4 52,2.2 54,0.4 56,2.2 58,0.4 60,2.2 62,0.4 64,2.2 66,0.4 68,2.2 70,0.4 72,2.2 74,0.4 76,2.2 78,0.4 80,2.2 82,0.4 84,2.2 86,0.4 88,2.2 90,0.4 92,2.2" fill="none" stroke="#d4127a" stroke-width="1"/></svg>
<svg class="abs" style="left:751.5px;top:693.6px" width="64" height="3" viewBox="0 0 64 3"><polyline points="0,2.2 2,0.4 4,2.2 6,0.4 8,2.2 10,0.4 12,2.2 14,0.4 16,2.2 18,0.4 20,2.2 22,0.4 24,2.2 26,0.4 28,2.2 30,0.4 32,2.2 34,0.4 36,2.2 38,0.4 40,2.2 42,0.4 44,2.2 46,0.4 48,2.2 50,0.4 52,2.2 54,0.4 56,2.2 58,0.4 60,2.2 62,0.4 64,2.2" fill="none" stroke="#d4127a" stroke-width="1"/></svg>
<svg class="abs" style="left:821.5px;top:693.6px" width="92" height="3" viewBox="0 0 92 3"><polyline points="0,2.2 2,0.4 4,2.2 6,0.4 8,2.2 10,0.4 12,2.2 14,0.4 16,2.2 18,0.4 20,2.2 22,0.4 24,2.2 26,0.4 28,2.2 30,0.4 32,2.2 34,0.4 36,2.2 38,0.4 40,2.2 42,0.4 44,2.2 46,0.4 48,2.2 50,0.4 52,2.2 54,0.4 56,2.2 58,0.4 60,2.2 62,0.4 64,2.2 66,0.4 68,2.2 70,0.4 72,2.2 74,0.4 76,2.2 78,0.4 80,2.2 82,0.4 84,2.2 86,0.4 88,2.2 90,0.4 92,2.2" fill="none" stroke="#d4127a" stroke-width="1"/></svg>
<div class="cl" style="left:465px;top:683px"><span class="c">List</span>&lt;<span class="c">LocalTransfer</span>&gt; <span class="v">localTransfers</span> = <span class="k">new</span> <span class="c">ArrayList</span>&lt;<span class="c">LocalTransfer</span>&gt;();</div>
<div class="ln dim" style="top:683px">88</div>
<div class="cl" style="left:465px;top:698px"><span class="k">try</span> {</div>
<div class="ln dim" style="top:698px">89</div>
<svg class="abs" style="left:492.5px;top:723.6px" width="64" height="3" viewBox="0 0 64 3"><polyline points="0,2.2 2,0.4 4,2.2 6,0.4 8,2.2 10,0.4 12,2.2 14,0.4 16,2.2 18,0.4 20,2.2 22,0.4 24,2.2 26,0.4 28,2.2 30,0.4 32,2.2 34,0.4 36,2.2 38,0.4 40,2.2 42,0.4 44,2.2 46,0.4 48,2.2 50,0.4 52,2.2 54,0.4 56,2.2 58,0.4 60,2.2 62,0.4 64,2.2" fill="none" stroke="#d4127a" stroke-width="1"/></svg>
<div class="cl" style="left:493px;top:713px">strBuffer = <span class="k">new</span> <span class="m">StringBuffer</span>().<span class="m">append</span>(<span class="s">&quot;SELECT *&quot;</span></div>
<div class="ln dim" style="top:713px">90</div>
<div class="cl" style="left:549px;top:728px">+ <span class="s">&quot;  FROM projetosga.local&quot;</span></div>
<div class="ln dim" style="top:728px">91</div>
<div class="cl" style="left:549px;top:743px">+ <span class="s">&quot;  ORDER BY nomelocal&quot;</span>);</div>
<div class="ln dim" style="top:743px">92</div>
<svg class="abs" style="left:492.5px;top:768.6px" width="29" height="3" viewBox="0 0 29 3"><polyline points="0,2.2 2,0.4 4,2.2 6,0.4 8,2.2 10,0.4 12,2.2 14,0.4 16,2.2 18,0.4 20,2.2 22,0.4 24,2.2 26,0.4 28,2.2" fill="none" stroke="#d4127a" stroke-width="1"/></svg>
<svg class="abs" style="left:541.5px;top:768.6px" width="85" height="3" viewBox="0 0 85 3"><polyline points="0,2.2 2,0.4 4,2.2 6,0.4 8,2.2 10,0.4 12,2.2 14,0.4 16,2.2 18,0.4 20,2.2 22,0.4 24,2.2 26,0.4 28,2.2 30,0.4 32,2.2 34,0.4 36,2.2 38,0.4 40,2.2 42,0.4 44,2.2 46,0.4 48,2.2 50,0.4 52,2.2 54,0.4 56,2.2 58,0.4 60,2.2 62,0.4 64,2.2 66,0.4 68,2.2 70,0.4 72,2.2 74,0.4 76,2.2 78,0.4 80,2.2 82,0.4 84,2.2" fill="none" stroke="#d4127a" stroke-width="1"/></svg>
<svg class="abs" style="left:842.5px;top:768.6px" width="64" height="3" viewBox="0 0 64 3"><polyline points="0,2.2 2,0.4 4,2.2 6,0.4 8,2.2 10,0.4 12,2.2 14,0.4 16,2.2 18,0.4 20,2.2 22,0.4 24,2.2 26,0.4 28,2.2 30,0.4 32,2.2 34,0.4 36,2.2 38,0.4 40,2.2 42,0.4 44,2.2 46,0.4 48,2.2 50,0.4 52,2.2 54,0.4 56,2.2 58,0.4 60,2.2 62,0.4 64,2.2" fill="none" stroke="#d4127a" stroke-width="1"/></svg>
<div class="cl" style="left:493px;top:758px">pstm = abrirconexao.getConexao().prepareStatement(strBuffer.toString());</div>
<div class="ln dim" style="top:758px">93</div>
<svg class="abs" style="left:492.5px;top:783.6px" width="15" height="3" viewBox="0 0 15 3"><polyline points="0,2.2 2,0.4 4,2.2 6,0.4 8,2.2 10,0.4 12,2.2 14,0.4" fill="none" stroke="#d4127a" stroke-width="1"/></svg>
<svg class="abs" style="left:527.5px;top:783.6px" width="29" height="3" viewBox="0 0 29 3"><polyline points="0,2.2 2,0.4 4,2.2 6,0.4 8,2.2 10,0.4 12,2.2 14,0.4 16,2.2 18,0.4 20,2.2 22,0.4 24,2.2 26,0.4 28,2.2" fill="none" stroke="#d4127a" stroke-width="1"/></svg>
<div class="cl" style="left:493px;top:773px">rs = pstm.executeQuery();</div>
<div class="ln dim" style="top:773px">94</div>
<svg class="abs" style="left:541.5px;top:798.6px" width="15" height="3" viewBox="0 0 15 3"><polyline points="0,2.2 2,0.4 4,2.2 6,0.4 8,2.2 10,0.4 12,2.2 14,0.4" fill="none" stroke="#d4127a" stroke-width="1"/></svg>
<div class="cl" style="left:493px;top:788px"><span class="k">while</span> (rs.next()) {</div>
<div class="ln dim" style="top:788px">95</div>
<svg class="abs" style="left:520.5px;top:813.6px" width="92" height="3" viewBox="0 0 92 3"><polyline points="0,2.2 2,0.4 4,2.2 6,0.4 8,2.2 10,0.4 12,2.2 14,0.4 16,2.2 18,0.4 20,2.2 22,0.4 24,2.2 26,0.4 28,2.2 30,0.4 32,2.2 34,0.4 36,2.2 38,0.4 40,2.2 42,0.4 44,2.2 46,0.4 48,2.2 50,0.4 52,2.2 54,0.4 56,2.2 58,0.4 60,2.2 62,0.4 64,2.2 66,0.4 68,2.2 70,0.4 72,2.2 74,0.4 76,2.2 78,0.4 80,2.2 82,0.4 84,2.2 86,0.4 88,2.2 90,0.4 92,2.2" fill="none" stroke="#d4127a" stroke-width="1"/></svg>
<svg class="abs" style="left:758.5px;top:813.6px" width="92" height="3" viewBox="0 0 92 3"><polyline points="0,2.2 2,0.4 4,2.2 6,0.4 8,2.2 10,0.4 12,2.2 14,0.4 16,2.2 18,0.4 20,2.2 22,0.4 24,2.2 26,0.4 28,2.2 30,0.4 32,2.2 34,0.4 36,2.2 38,0.4 40,2.2 42,0.4 44,2.2 46,0.4 48,2.2 50,0.4 52,2.2 54,0.4 56,2.2 58,0.4 60,2.2 62,0.4 64,2.2 66,0.4 68,2.2 70,0.4 72,2.2 74,0.4 76,2.2 78,0.4 80,2.2 82,0.4 84,2.2 86,0.4 88,2.2 90,0.4 92,2.2" fill="none" stroke="#d4127a" stroke-width="1"/></svg>
<div class="cl" style="left:521px;top:803px"><span class="c">LocalTransfer</span> <span class="v">localTransfer</span> = <span class="k">new</span> <span class="c">LocalTransfer</span>();</div>
<div class="ln dim" style="top:803px">96</div>
<svg class="abs" style="left:660.5px;top:828.6px" width="15" height="3" viewBox="0 0 15 3"><polyline points="0,2.2 2,0.4 4,2.2 6,0.4 8,2.2 10,0.4 12,2.2 14,0.4" fill="none" stroke="#d4127a" stroke-width="1"/></svg>
<div class="cl" style="left:521px;top:818px"><span class="r">localTransfer</span>.setId(rs.getShort(<span class="s">&quot;idlocal&quot;</span>));</div>
<div class="ln dim" style="top:818px">97</div>
<svg class="abs" style="left:709.5px;top:843.6px" width="15" height="3" viewBox="0 0 15 3"><polyline points="0,2.2 2,0.4 4,2.2 6,0.4 8,2.2 10,0.4 12,2.2 14,0.4" fill="none" stroke="#d4127a" stroke-width="1"/></svg>
<div class="cl" style="left:521px;top:833px"><span class="r">localTransfer</span>.setNomelocal(rs.getString(<span class="s">&quot;nomelocal&quot;</span>));</div>
<div class="ln dim" style="top:833px">98</div>
<div class="cl" style="left:521px;top:848px"><span class="r">localTransfers</span>.add(<span class="r">localTransfer</span>);</div>
<div class="ln dim" style="top:848px">99</div>
<div class="cl" style="left:493px;top:863px">}</div>
<div class="ln dim" style="top:863px">100</div>
<div class="cl" style="left:465px;top:878px">} <span class="k">catch</span> (<span class="c">SQLException</span> <span class="v">ex</span>) {</div>
<div class="ln dim" style="top:878px">101</div>
<svg class="abs" style="left:492.5px;top:903.6px" width="85" height="3" viewBox="0 0 85 3"><polyline points="0,2.2 2,0.4 4,2.2 6,0.4 8,2.2 10,0.4 12,2.2 14,0.4 16,2.2 18,0.4 20,2.2 22,0.4 24,2.2 26,0.4 28,2.2 30,0.4 32,2.2 34,0.4 36,2.2 38,0.4 40,2.2 42,0.4 44,2.2 46,0.4 48,2.2 50,0.4 52,2.2 54,0.4 56,2.2 58,0.4 60,2.2 62,0.4 64,2.2 66,0.4 68,2.2 70,0.4 72,2.2 74,0.4 76,2.2 78,0.4 80,2.2 82,0.4 84,2.2" fill="none" stroke="#d4127a" stroke-width="1"/></svg>
<svg class="abs" style="left:583.5px;top:903.6px" width="57" height="3" viewBox="0 0 57 3"><polyline points="0,2.2 2,0.4 4,2.2 6,0.4 8,2.2 10,0.4 12,2.2 14,0.4 16,2.2 18,0.4 20,2.2 22,0.4 24,2.2 26,0.4 28,2.2 30,0.4 32,2.2 34,0.4 36,2.2 38,0.4 40,2.2 42,0.4 44,2.2 46,0.4 48,2.2 50,0.4 52,2.2 54,0.4 56,2.2" fill="none" stroke="#d4127a" stroke-width="1"/></svg>
<div class="cl" style="left:493px;top:893px">logPrincipal(<span class="c">LocalDAO</span>.<span class="k">class</span>).error(<span class="s">&quot;&gt;&gt;&gt;&gt;ERROR AO LISTAR LOCAL(listarTodosLocal)&quot;</span>, <span class="r">ex</span>);</div>
<div class="ln dim" style="top:893px">102</div>
<div class="cl" style="left:465px;top:908px">} <span class="k">finally</span> {</div>
<div class="ln dim" style="top:908px">103</div>
<svg class="abs" style="left:492.5px;top:933.6px" width="15" height="3" viewBox="0 0 15 3"><polyline points="0,2.2 2,0.4 4,2.2 6,0.4 8,2.2 10,0.4 12,2.2 14,0.4" fill="none" stroke="#d4127a" stroke-width="1"/></svg>
<div class="cl" style="left:493px;top:923px">rs.close();</div>
<div class="ln dim" style="top:923px">104</div>
<svg class="abs" style="left:492.5px;top:948.6px" width="85" height="3" viewBox="0 0 85 3"><polyline points="0,2.2 2,0.4 4,2.2 6,0.4 8,2.2 10,0.4 12,2.2 14,0.4 16,2.2 18,0.4 20,2.2 22,0.4 24,2.2 26,0.4 28,2.2 30,0.4 32,2.2 34,0.4 36,2.2 38,0.4 40,2.2 42,0.4 44,2.2 46,0.4 48,2.2 50,0.4 52,2.2 54,0.4 56,2.2 58,0.4 60,2.2 62,0.4 64,2.2 66,0.4 68,2.2 70,0.4 72,2.2 74,0.4 76,2.2 78,0.4 80,2.2 82,0.4 84,2.2" fill="none" stroke="#d4127a" stroke-width="1"/></svg>
<div class="cl" style="left:493px;top:938px">abrirconexao.fecharConexao();</div>
<div class="ln dim" style="top:938px">105</div>
<div class="cl" style="left:465px;top:953px">}</div>
<div class="ln dim" style="top:953px">106</div>
<div class="cl" style="left:465px;top:968px"><span class="k">return</span> <span class="r">localTransfers</span>;</div>
<div class="ln dim" style="top:968px">107</div>
<div class="cl" style="left:437px;top:983px">}</div>
<div class="ln dim" style="top:983px">108</div>
<div class="cl" style="left:409px;top:998px">}</div>
<div class="ln" style="top:998px">109</div>
<div class="abs" style="left:444px;top:982px;width:1px;height:15px;background:#e8e8e8"></div>
<svg class="abs" style="left:363.6px;top:666.6px" width="13" height="14" viewBox="0 0 13 14" ><circle cx="3.8" cy="4.4" r="3.7" fill="#f8d572"/><circle cx="3" cy="3.4" r="1.6" fill="#fdeeb8"/><rect x="2.2" y="8" width="3.2" height="2.8" fill="#e9eef8"/><path d="M2.2 9.4h3.2" stroke="#8a9ac8" stroke-width=".6"/><rect x="5.2" y="5.6" width="7.4" height="7.6" fill="#df2f3c"/><path d="M7 7.4l3.8 4M10.8 7.4l-3.8 4" stroke="#fff" stroke-width="1.4"/></svg><svg class="abs" style="left:363.6px;top:681.6px" width="13" height="14" viewBox="0 0 13 14" ><circle cx="3.8" cy="4.4" r="3.7" fill="#f8d572"/><circle cx="3" cy="3.4" r="1.6" fill="#fdeeb8"/><rect x="2.2" y="8" width="3.2" height="2.8" fill="#e9eef8"/><path d="M2.2 9.4h3.2" stroke="#8a9ac8" stroke-width=".6"/><rect x="5.2" y="5.6" width="7.4" height="7.6" fill="#df2f3c"/><path d="M7 7.4l3.8 4M10.8 7.4l-3.8 4" stroke="#fff" stroke-width="1.4"/></svg><svg class="abs" style="left:363.6px;top:711.6px" width="13" height="14" viewBox="0 0 13 14" ><circle cx="3.8" cy="4.4" r="3.7" fill="#f8d572"/><circle cx="3" cy="3.4" r="1.6" fill="#fdeeb8"/><rect x="2.2" y="8" width="3.2" height="2.8" fill="#e9eef8"/><path d="M2.2 9.4h3.2" stroke="#8a9ac8" stroke-width=".6"/><rect x="5.2" y="5.6" width="7.4" height="7.6" fill="#df2f3c"/><path d="M7 7.4l3.8 4M10.8 7.4l-3.8 4" stroke="#fff" stroke-width="1.4"/></svg><svg class="abs" style="left:363.6px;top:756.6px" width="13" height="14" viewBox="0 0 13 14" ><circle cx="3.8" cy="4.4" r="3.7" fill="#f8d572"/><circle cx="3" cy="3.4" r="1.6" fill="#fdeeb8"/><rect x="2.2" y="8" width="3.2" height="2.8" fill="#e9eef8"/><path d="M2.2 9.4h3.2" stroke="#8a9ac8" stroke-width=".6"/><rect x="5.2" y="5.6" width="7.4" height="7.6" fill="#df2f3c"/><path d="M7 7.4l3.8 4M10.8 7.4l-3.8 4" stroke="#fff" stroke-width="1.4"/></svg><svg class="abs" style="left:363.6px;top:771.6px" width="13" height="14" viewBox="0 0 13 14" ><circle cx="3.8" cy="4.4" r="3.7" fill="#f8d572"/><circle cx="3" cy="3.4" r="1.6" fill="#fdeeb8"/><rect x="2.2" y="8" width="3.2" height="2.8" fill="#e9eef8"/><path d="M2.2 9.4h3.2" stroke="#8a9ac8" stroke-width=".6"/><rect x="5.2" y="5.6" width="7.4" height="7.6" fill="#df2f3c"/><path d="M7 7.4l3.8 4M10.8 7.4l-3.8 4" stroke="#fff" stroke-width="1.4"/></svg><svg class="abs" style="left:363.6px;top:786.6px" width="13" height="14" viewBox="0 0 13 14" ><circle cx="3.8" cy="4.4" r="3.7" fill="#f8d572"/><circle cx="3" cy="3.4" r="1.6" fill="#fdeeb8"/><rect x="2.2" y="8" width="3.2" height="2.8" fill="#e9eef8"/><path d="M2.2 9.4h3.2" stroke="#8a9ac8" stroke-width=".6"/><rect x="5.2" y="5.6" width="7.4" height="7.6" fill="#df2f3c"/><path d="M7 7.4l3.8 4M10.8 7.4l-3.8 4" stroke="#fff" stroke-width="1.4"/></svg><svg class="abs" style="left:363.6px;top:801.6px" width="13" height="14" viewBox="0 0 13 14" ><circle cx="3.8" cy="4.4" r="3.7" fill="#f8d572"/><circle cx="3" cy="3.4" r="1.6" fill="#fdeeb8"/><rect x="2.2" y="8" width="3.2" height="2.8" fill="#e9eef8"/><path d="M2.2 9.4h3.2" stroke="#8a9ac8" stroke-width=".6"/><rect x="5.2" y="5.6" width="7.4" height="7.6" fill="#df2f3c"/><path d="M7 7.4l3.8 4M10.8 7.4l-3.8 4" stroke="#fff" stroke-width="1.4"/></svg><svg class="abs" style="left:363.6px;top:816.6px" width="13" height="14" viewBox="0 0 13 14" ><circle cx="3.8" cy="4.4" r="3.7" fill="#f8d572"/><circle cx="3" cy="3.4" r="1.6" fill="#fdeeb8"/><rect x="2.2" y="8" width="3.2" height="2.8" fill="#e9eef8"/><path d="M2.2 9.4h3.2" stroke="#8a9ac8" stroke-width=".6"/><rect x="5.2" y="5.6" width="7.4" height="7.6" fill="#df2f3c"/><path d="M7 7.4l3.8 4M10.8 7.4l-3.8 4" stroke="#fff" stroke-width="1.4"/></svg><svg class="abs" style="left:363.6px;top:831.6px" width="13" height="14" viewBox="0 0 13 14" ><circle cx="3.8" cy="4.4" r="3.7" fill="#f8d572"/><circle cx="3" cy="3.4" r="1.6" fill="#fdeeb8"/><rect x="2.2" y="8" width="3.2" height="2.8" fill="#e9eef8"/><path d="M2.2 9.4h3.2" stroke="#8a9ac8" stroke-width=".6"/><rect x="5.2" y="5.6" width="7.4" height="7.6" fill="#df2f3c"/><path d="M7 7.4l3.8 4M10.8 7.4l-3.8 4" stroke="#fff" stroke-width="1.4"/></svg><svg class="abs" style="left:363.6px;top:891.6px" width="13" height="14" viewBox="0 0 13 14" ><circle cx="3.8" cy="4.4" r="3.7" fill="#f8d572"/><circle cx="3" cy="3.4" r="1.6" fill="#fdeeb8"/><rect x="2.2" y="8" width="3.2" height="2.8" fill="#e9eef8"/><path d="M2.2 9.4h3.2" stroke="#8a9ac8" stroke-width=".6"/><rect x="5.2" y="5.6" width="7.4" height="7.6" fill="#df2f3c"/><path d="M7 7.4l3.8 4M10.8 7.4l-3.8 4" stroke="#fff" stroke-width="1.4"/></svg><svg class="abs" style="left:363.6px;top:921.6px" width="13" height="14" viewBox="0 0 13 14" ><circle cx="3.8" cy="4.4" r="3.7" fill="#f8d572"/><circle cx="3" cy="3.4" r="1.6" fill="#fdeeb8"/><rect x="2.2" y="8" width="3.2" height="2.8" fill="#e9eef8"/><path d="M2.2 9.4h3.2" stroke="#8a9ac8" stroke-width=".6"/><rect x="5.2" y="5.6" width="7.4" height="7.6" fill="#df2f3c"/><path d="M7 7.4l3.8 4M10.8 7.4l-3.8 4" stroke="#fff" stroke-width="1.4"/></svg><svg class="abs" style="left:363.6px;top:936.6px" width="13" height="14" viewBox="0 0 13 14" ><circle cx="3.8" cy="4.4" r="3.7" fill="#f8d572"/><circle cx="3" cy="3.4" r="1.6" fill="#fdeeb8"/><rect x="2.2" y="8" width="3.2" height="2.8" fill="#e9eef8"/><path d="M2.2 9.4h3.2" stroke="#8a9ac8" stroke-width=".6"/><rect x="5.2" y="5.6" width="7.4" height="7.6" fill="#df2f3c"/><path d="M7 7.4l3.8 4M10.8 7.4l-3.8 4" stroke="#fff" stroke-width="1.4"/></svg><svg class="abs" style="left:397.2px;top:264px" width="9" height="9" viewBox="0 0 9 9" ><circle cx="4.5" cy="4.5" r="4.4" fill="#c9ccd6"/><circle cx="4.5" cy="4.5" r="3.2" fill="#dfe1e8"/><path d="M2.2 4.5h4.6" stroke="#3a3d55" stroke-width="1.3"/></svg><svg class="abs" style="left:397.2px;top:669px" width="9" height="9" viewBox="0 0 9 9" ><circle cx="4.5" cy="4.5" r="4.4" fill="#c9ccd6"/><circle cx="4.5" cy="4.5" r="3.2" fill="#dfe1e8"/><path d="M2.2 4.5h4.6" stroke="#3a3d55" stroke-width="1.3"/></svg>
<div class="abs" style="left:1898.3px;top:97px;width:4.7px;height:903px;background:#383838"></div><div class="abs" style="left:1898.3px;top:503px;width:4.7px;height:497px;background:#4a4a4a"></div><div class="abs" style="left:1903px;top:97px;width:15px;height:916px;background:#262626;border-radius:0 0 6px 0"></div><div class="abs" style="left:1905px;top:815px;width:9px;height:185px;background:#585b63;border:1px solid #b4b6bc"></div><div class="abs" style="left:1905px;top:823.4px;width:9px;height:4.6px;background:#c2185b;border-top:1px solid #7a0f3a;border-bottom:1px solid #7a0f3a;box-shadow:inset 0 1.4px 0 #5a0a2a"></div><div class="abs" style="left:1905px;top:831.9px;width:9px;height:4.6px;background:#c2185b;border-top:1px solid #7a0f3a;border-bottom:1px solid #7a0f3a;box-shadow:inset 0 1.4px 0 #5a0a2a"></div><div class="abs" style="left:1905px;top:848.7px;width:9px;height:4.6px;background:#c2185b;border-top:1px solid #7a0f3a;border-bottom:1px solid #7a0f3a;box-shadow:inset 0 1.4px 0 #5a0a2a"></div><div class="abs" style="left:1905px;top:874.0px;width:9px;height:4.6px;background:#c2185b;border-top:1px solid #7a0f3a;border-bottom:1px solid #7a0f3a;box-shadow:inset 0 1.4px 0 #5a0a2a"></div><div class="abs" style="left:1905px;top:882.4px;width:9px;height:4.6px;background:#c2185b;border-top:1px solid #7a0f3a;border-bottom:1px solid #7a0f3a;box-shadow:inset 0 1.4px 0 #5a0a2a"></div><div class="abs" style="left:1905px;top:890.9px;width:9px;height:4.6px;background:#c2185b;border-top:1px solid #7a0f3a;border-bottom:1px solid #7a0f3a;box-shadow:inset 0 1.4px 0 #5a0a2a"></div><div class="abs" style="left:1905px;top:899.3px;width:9px;height:4.6px;background:#c2185b;border-top:1px solid #7a0f3a;border-bottom:1px solid #7a0f3a;box-shadow:inset 0 1.4px 0 #5a0a2a"></div><div class="abs" style="left:1905px;top:907.7px;width:9px;height:4.6px;background:#c2185b;border-top:1px solid #7a0f3a;border-bottom:1px solid #7a0f3a;box-shadow:inset 0 1.4px 0 #5a0a2a"></div><div class="abs" style="left:1905px;top:916.2px;width:9px;height:4.6px;background:#c2185b;border-top:1px solid #7a0f3a;border-bottom:1px solid #7a0f3a;box-shadow:inset 0 1.4px 0 #5a0a2a"></div><div class="abs" style="left:1905px;top:949.9px;width:9px;height:4.6px;background:#c2185b;border-top:1px solid #7a0f3a;border-bottom:1px solid #7a0f3a;box-shadow:inset 0 1.4px 0 #5a0a2a"></div><div class="abs" style="left:1905px;top:966.7px;width:9px;height:4.6px;background:#c2185b;border-top:1px solid #7a0f3a;border-bottom:1px solid #7a0f3a;box-shadow:inset 0 1.4px 0 #5a0a2a"></div><div class="abs" style="left:1905px;top:975.2px;width:9px;height:4.6px;background:#c2185b;border-top:1px solid #7a0f3a;border-bottom:1px solid #7a0f3a;box-shadow:inset 0 1.4px 0 #5a0a2a"></div>
</div>

<div id="status">
 <div class="sep" style="left:1067px"></div><div class="st" style="left:1075px"><span style="letter-spacing:-0.025px">Writable</span></div>
 <div class="sep" style="left:1201px"></div><div class="st" style="left:1209px"><span style="letter-spacing:-0.255px">Smart Insert</span></div>
 <div class="sep" style="left:1329px"></div><div class="st" style="left:1337px"><span style="letter-spacing:-0.586px">108 : 6 : 2861</span></div>
 <svg class="abs" style="left:1455px;top:7px" width="3" height="16" viewBox="0 0 3 16" ><rect x="0" y="0" width="2" height="2" fill="#d4d7d9"/><rect x="0" y="4.4" width="2" height="2" fill="#d4d7d9"/><rect x="0" y="8.8" width="2" height="2" fill="#d4d7d9"/><rect x="0" y="13.2" width="2" height="2" fill="#d4d7d9"/></svg><div class="abs" style="left:1459px;top:3px;width:147px;height:22px;background:#4b4f51;border:1px solid #c4c6c8"></div><div class="abs" style="left:1460px;top:4px;width:47px;height:20px;background:#9b9d9f"></div><div class="abs" style="left:1588px;top:4px;width:1px;height:20px;background:#c4c6c8"></div><div class="st" style="left:1460px;width:128px;text-align:center;top:7px;color:#ececec"><span style="letter-spacing:-0.199px">751M of 2048M</span></div><svg class="abs" style="left:1591px;top:6.6px" width="12" height="15" viewBox="0 0 12 15" ><path d="M1 2.6h10" stroke="#9ab4ea" stroke-width="1.4"/><rect x="4" y="0.4" width="4" height="1.6" fill="#9ab4ea"/><path d="M1.6 3.8h8.8l-.8 10.6H2.4z" fill="#7d9ce0" stroke="#b4c8f4" stroke-width=".6"/><path d="M4 5.4v7.6M6 5.4v7.6M8 5.4v7.6" stroke="#3f5cae" stroke-width="1"/></svg><svg class="abs" style="left:1607.4px;top:7px" width="3" height="16" viewBox="0 0 3 16" ><rect x="0" y="0" width="2" height="2" fill="#d4d7d9"/><rect x="0" y="4.4" width="2" height="2" fill="#d4d7d9"/><rect x="0" y="8.8" width="2" height="2" fill="#d4d7d9"/><rect x="0" y="13.2" width="2" height="2" fill="#d4d7d9"/></svg><svg class="abs" style="left:1893.4px;top:7px" width="3" height="16" viewBox="0 0 3 16" ><rect x="0" y="0" width="2" height="2" fill="#d4d7d9"/><rect x="0" y="4.4" width="2" height="2" fill="#d4d7d9"/><rect x="0" y="8.8" width="2" height="2" fill="#d4d7d9"/><rect x="0" y="13.2" width="2" height="2" fill="#d4d7d9"/></svg><svg class="abs" style="left:1902.6px;top:6.4px" width="12" height="16" viewBox="0 0 12 16" ><circle cx="5.6" cy="5.6" r="5" fill="#f9d56a"/><circle cx="4.4" cy="4.4" r="2.4" fill="#fdeeb4"/><path d="M3 9.6h5.2v2H3z" fill="#f1c84c"/><rect x="3.2" y="11.4" width="4.8" height="3" fill="#e4e8f0"/><path d="M3.2 12.4h4.8M3.2 13.6h4.8" stroke="#8a90a4" stroke-width=".6"/></svg>
</div>
<div id="taskbar"><svg class="abs" style="left:15.8px;top:11.8px" width="17" height="16" viewBox="0 0 17 16" ><path d="M0 2.3l6.9-1v6.4H0zM7.8 1.2L17 0v7.7H7.8zM0 8.6h6.9v6.4l-6.9-1zM7.8 8.6H17V16l-9.2-1.3z" fill="#fff"/></svg><div class="abs" style="left:48px;top:0;width:344px;height:40px;background:#f3f3f3;border-top:1px solid #dcdcdc"></div><svg class="abs" style="left:59.6px;top:11.6px" width="18" height="17" viewBox="0 0 18 17" ><circle cx="10.6" cy="6.6" r="5.4" fill="none" stroke="#1c1c1c" stroke-width="1.3"/><path d="M6.8 10.6L0.8 16.4" stroke="#1c1c1c" stroke-width="1.4"/></svg><div class="abs" style="left:88.6px;top:10.5px;font-size:15px;line-height:18px;color:#2b2b2b;white-space:nowrap" id="srch"><span style="letter-spacing:0.008px">Digite aqui para pesquisar</span></div><svg class="abs" style="left:315px;top:0.6px" width="76" height="39" viewBox="0 0 76 39" ><g><circle cx="11.6" cy="3.4" r="1.7" fill="#62a8f0"/><circle cx="9" cy="8" r="2" fill="#62a8f0"/><circle cx="11.4" cy="14" r="2.4" fill="#62a8f0"/><path d="M6 38c0-8-2-12-5-15M6 38c0-10 2-14 5-17M6 30l-4-4M6 27l4-3" stroke="#25a594" stroke-width="2.2" fill="none" stroke-linecap="round"/><path d="M66 38c0-10 2-16 6-22M66 38c-1-8-3-12-6-14M66 30c2-4 5-6 8-7M66 26l-3-4" stroke="#25a594" stroke-width="2.4" fill="none" stroke-linecap="round"/><path d="M52 36c0-4 1-6 3-8M52 36c0-3-1-5-3-6" stroke="#25a594" stroke-width="1.8" fill="none" stroke-linecap="round"/><path d="M66.6 4.4l1.4 3l3 1.2l-3 1.4l-1.4 3l-1.2-3l-3-1.4l3-1.2z" fill="#c95fd0"/><ellipse cx="19" cy="20.6" rx="5.4" ry="4" fill="#b9d43a"/><circle cx="17.2" cy="19.4" r="0.9" fill="#2a3a1a"/><path d="M22 25l-3 7l5-1l3-5zM46 23l7 3l1-3l-6-3z" fill="#a8cc3c"/><path d="M22 22c2-12 26-13 29 0c1 4-28 5-29 0z" fill="#3f9f7c"/><path d="M27 18c2-6 16-7 19-1l-4 5l-11 1z" fill="#3d8f8c"/><path d="M22 23c6 3 22 3 29-1l0 2c-6 4-22 4-29 1z" fill="#8cc63f"/><circle cx="39" cy="34.4" r="1.7" fill="#f2a02c"/><circle cx="30.6" cy="31.4" r="1.6" fill="#4fc6d8"/></g></svg><svg class="abs" style="left:406.6px;top:7.6px" width="24.6" height="24.2" viewBox="0 0 24 24" ><defs><linearGradient id="eg1" x1="0" y1="0" x2="1" y2="1"><stop offset="0" stop-color="#37c1e8"/><stop offset="1" stop-color="#0c59a4"/></linearGradient><linearGradient id="eg2" x1="0" y1="0" x2="1" y2="0"><stop offset="0" stop-color="#2fb3e6"/><stop offset=".6" stop-color="#3fc86a"/><stop offset="1" stop-color="#7ad840"/></linearGradient></defs><circle cx="12" cy="12" r="12" fill="url(#eg1)"/><path d="M0.4 10C2 2 10 -1 16 1c6 2 8.6 7 7.6 11.4c-.6 2.6-3 4-6 3.8c-2.4-.2-3.2-1.4-2.6-2.8c1-2.4-.6-5.6-4.6-5.8C6 7.400 2 9 0.400 13z" fill="url(#eg2)"/><path d="M9.600 8.200c-3 .8-4.600 3.800-3.800 7.200c1 4.200 5.400 7.200 10.200 6.200c-2 2-5.400 3-8.600 1.800C2.400 21.400-.6 16 .6 10.600C3 7.600 7 7 9.600 8.200z" fill="#0d4f9c"/><ellipse cx="12.600" cy="13.400" rx="3.400" ry="3.600" fill="#233a46"/></svg><div class="abs" style="left:399px;top:38px;width:40px;height:2px;background:#8cc6f4"></div><svg class="abs" style="left:457px;top:10.6px" width="22.6" height="18" viewBox="0 0 22.6 18" ><path d="M0.600 2.200c0-.8.600-1.400 1.400-1.400h6l2 2.200h10.600c.8 0 1.400.6 1.400 1.400v2H0.600z" fill="#e8a81c"/><rect x="0.600" y="3.800" width="21.400" height="13.400" rx="1" fill="#fbd25a"/><rect x="0.600" y="9.600" width="21.400" height="7.600" fill="#f6c33c"/><path d="M5.600 17.200v-5.600h11.400v5.600h-3v-3h-5.400v3z" fill="#3c8ee0"/><rect x="5.600" y="10.400" width="11.400" height="1.800" fill="#2f74c4"/></svg><svg class="abs" style="left:504.8px;top:9px" width="24" height="21.4" viewBox="0 0 24 21.4" ><rect x="7.600" y="0.400" width="15.600" height="14" rx="1" fill="#1a74d0"/><rect x="10" y="0.400" width="6.600" height="6.400" fill="#36a0f0"/><rect x="16.600" y="0.400" width="6.600" height="6.400" fill="#5cc0f8"/><rect x="16.600" y="6.800" width="6.600" height="6.400" fill="#2a8ce4"/><path d="M7.600 10l15.600 5.600v4.600c0 .6-.4 1-1 1H8.600c-.6 0-1-.4-1-1z" fill="#1e90e8"/><path d="M23.200 9.600L10 21.200h12.200c.6 0 1-.4 1-1z" fill="#1468b8"/><rect x="0" y="4.600" width="12.400" height="12.400" rx="1.200" fill="#0f62b8"/><circle cx="6.200" cy="10.800" r="3.200" fill="none" stroke="#fff" stroke-width="1.700"/></svg><svg class="abs" style="left:554.6px;top:8px" width="22.6" height="22.8" viewBox="0 0 22.6 22.8" ><circle cx="7.400" cy="7.400" r="7" fill="#1fa4ec"/><circle cx="15" cy="15.400" r="7" fill="#1296e0"/><circle cx="11.200" cy="11.400" r="9.600" fill="#22a8f0"/><text x="11.300" y="17" font-family="Liberation Sans, sans-serif" font-weight="bold" font-size="16" fill="#fff" text-anchor="middle">S</text></svg><div class="abs" style="left:546px;top:38px;width:40px;height:2px;background:#8cc6f4"></div><div class="abs" style="left:591px;top:0;width:48px;height:40px;background:#46565f"></div><div class="abs" style="left:591px;top:38px;width:48px;height:2px;background:#8cc6f4"></div><svg class="abs" style="left:602.8px;top:8px" width="24.4" height="23.6" viewBox="0 0 24.4 23.6" ><rect x="0.400" y="0.400" width="23.600" height="23" rx="1" fill="#46388c"/><g fill="#e9e9ee"><circle cx="12.200" cy="12" r="9.400"/><rect x="10.400" y="0" width="3.600" height="4" transform="rotate(0 12.2 12)"/><rect x="10.400" y="0" width="3.600" height="4" transform="rotate(36 12.2 12)"/><rect x="10.400" y="0" width="3.600" height="4" transform="rotate(72 12.2 12)"/><rect x="10.400" y="0" width="3.600" height="4" transform="rotate(108 12.2 12)"/><rect x="10.400" y="0" width="3.600" height="4" transform="rotate(144 12.2 12)"/><rect x="10.400" y="0" width="3.600" height="4" transform="rotate(180 12.2 12)"/><rect x="10.400" y="0" width="3.600" height="4" transform="rotate(216 12.2 12)"/><rect x="10.400" y="0" width="3.600" height="4" transform="rotate(252 12.2 12)"/><rect x="10.400" y="0" width="3.600" height="4" transform="rotate(288 12.2 12)"/><rect x="10.400" y="0" width="3.600" height="4" transform="rotate(324 12.2 12)"/></g><circle cx="12.200" cy="12" r="6.800" fill="#3a2c6c"/><rect x="1" y="7.200" width="22.400" height="10" fill="#3a2456" opacity=".85"/><text x="12.200" y="11.400" font-family="Liberation Sans, sans-serif" font-weight="bold" font-size="5.400" fill="#f2962a" text-anchor="middle">Java EE</text><text x="12.200" y="16.800" font-family="Liberation Sans, sans-serif" font-weight="bold" font-size="5.800" fill="#f2962a" text-anchor="middle">IDE</text></svg><svg class="abs" style="left:1518.6px;top:10.6px" width="24" height="17" viewBox="0 0 24 17" ><path d="M1 15.400L8 8.400l4 4L21 3.400" stroke="#27b84e" stroke-width="2" fill="none"/><path d="M15.400 2.400h7v7" stroke="#27b84e" stroke-width="2" fill="none"/></svg><div class="abs" style="left:1550.600px;top:13.600px;font-size:14.500px;line-height:16px;color:#fff;white-space:nowrap" id="pbr"><span style="letter-spacing:-1.943px">PBR</span></div><div class="abs" style="left:1584.600px;top:13.600px;font-size:14.500px;line-height:16px;color:#27b84e;white-space:nowrap" id="pct"><span style="letter-spacing:-0.682px">+4,73%</span></div><svg class="abs" style="left:1646.6px;top:15.4px" width="12.6" height="8" viewBox="0 0 12.6 8" ><path d="M0.800 7.200L6.300 1.400l5.500 5.800" stroke="#fff" stroke-width="1.300" fill="none"/></svg><svg class="abs" style="left:1670.6px;top:12px" width="13" height="16" viewBox="0 0 13 16" ><rect x="1.600" y="4" width="7" height="7.600" rx="1.400" fill="none" stroke="#fff" stroke-width="1.100"/><path d="M8.600 6.800l3.400-1.800v6l-3.400-1.800" fill="none" stroke="#fff" stroke-width="1.100"/><path d="M2.400 2.400c1-1.800 6-1.800 7 0M2.400 13.400c1 1.800 6 1.800 7 0" stroke="#fff" stroke-width="1" fill="none"/></svg><svg class="abs" style="left:1692.4px;top:14.6px" width="17.6" height="11" viewBox="0 0 17.6 11" ><path d="M4 10.600c-5 0-4.600-6 -.4-6C4.600 1 9.600 0 11.400 3.600c1.600-.8 3.400 0 3.600 2c3.400.4 3 5-.4 5z" fill="#e8ecf2"/><path d="M7 10.600L15 5.600c3.400.4 3 5-.4 5z" fill="#c4cad6"/></svg><svg class="abs" style="left:1716px;top:13.4px" width="18" height="15" viewBox="0 0 18 15" ><rect x="3.600" y="2.600" width="12.600" height="8" fill="none" stroke="#fff" stroke-width="1.100"/><path d="M7 13.800h6M10 10.600v3.200" stroke="#fff" stroke-width="1.100"/><rect x="0.600" y="0.600" width="5" height="4" fill="#15223a" stroke="#fff" stroke-width="1"/><path d="M3 4.600v9.200h2" stroke="#fff" stroke-width="1" fill="none"/></svg><svg class="abs" style="left:1740.6px;top:13px" width="18" height="15" viewBox="0 0 18 15" ><path d="M1 5.400h3l3.600-3.600v11.400L4 9.600H1z" fill="none" stroke="#fff" stroke-width="1.100"/><path d="M10 5.200c1 1.200 1 3.400 0 4.600M12.200 3.400c2 2.200 2 6 0 8.200M14.400 1.600c3 3.200 3 8.600 0 11.800" stroke="#fff" stroke-width="1" fill="none"/></svg><div class="abs" style="left:1758px;top:4.500px;width:42px;text-align:center;font-size:12px;line-height:14px;color:#fff" id="por"><span style="letter-spacing:-1.172px">POR</span></div><div class="abs" style="left:1758px;top:22px;width:42px;text-align:center;font-size:12px;line-height:14px;color:#fff" id="ptb"><span style="letter-spacing:-1.315px">PTB</span></div><div class="abs" style="left:1792px;top:4px;width:80px;text-align:center;font-size:12px;line-height:14px;color:#fff" id="clk"><span style="letter-spacing:-0.606px">15:46</span></div><div class="abs" style="left:1792px;top:22px;width:80px;text-align:center;font-size:12px;line-height:14px;color:#fff" id="dte"><span style="letter-spacing:-0.256px">23/05/2022</span></div><svg class="abs" style="left:1879.4px;top:12.4px" width="16" height="16" viewBox="0 0 16 16" ><path d="M0.600 0.600h14.800v10.800h-4l-3.400 3.400v-3.400h-7.400z" fill="none" stroke="#fff" stroke-width="1.100"/></svg><div class="abs" style="left:1915px;top:0;width:1px;height:40px;background:#5a6478"></div></div>

</body></html>
